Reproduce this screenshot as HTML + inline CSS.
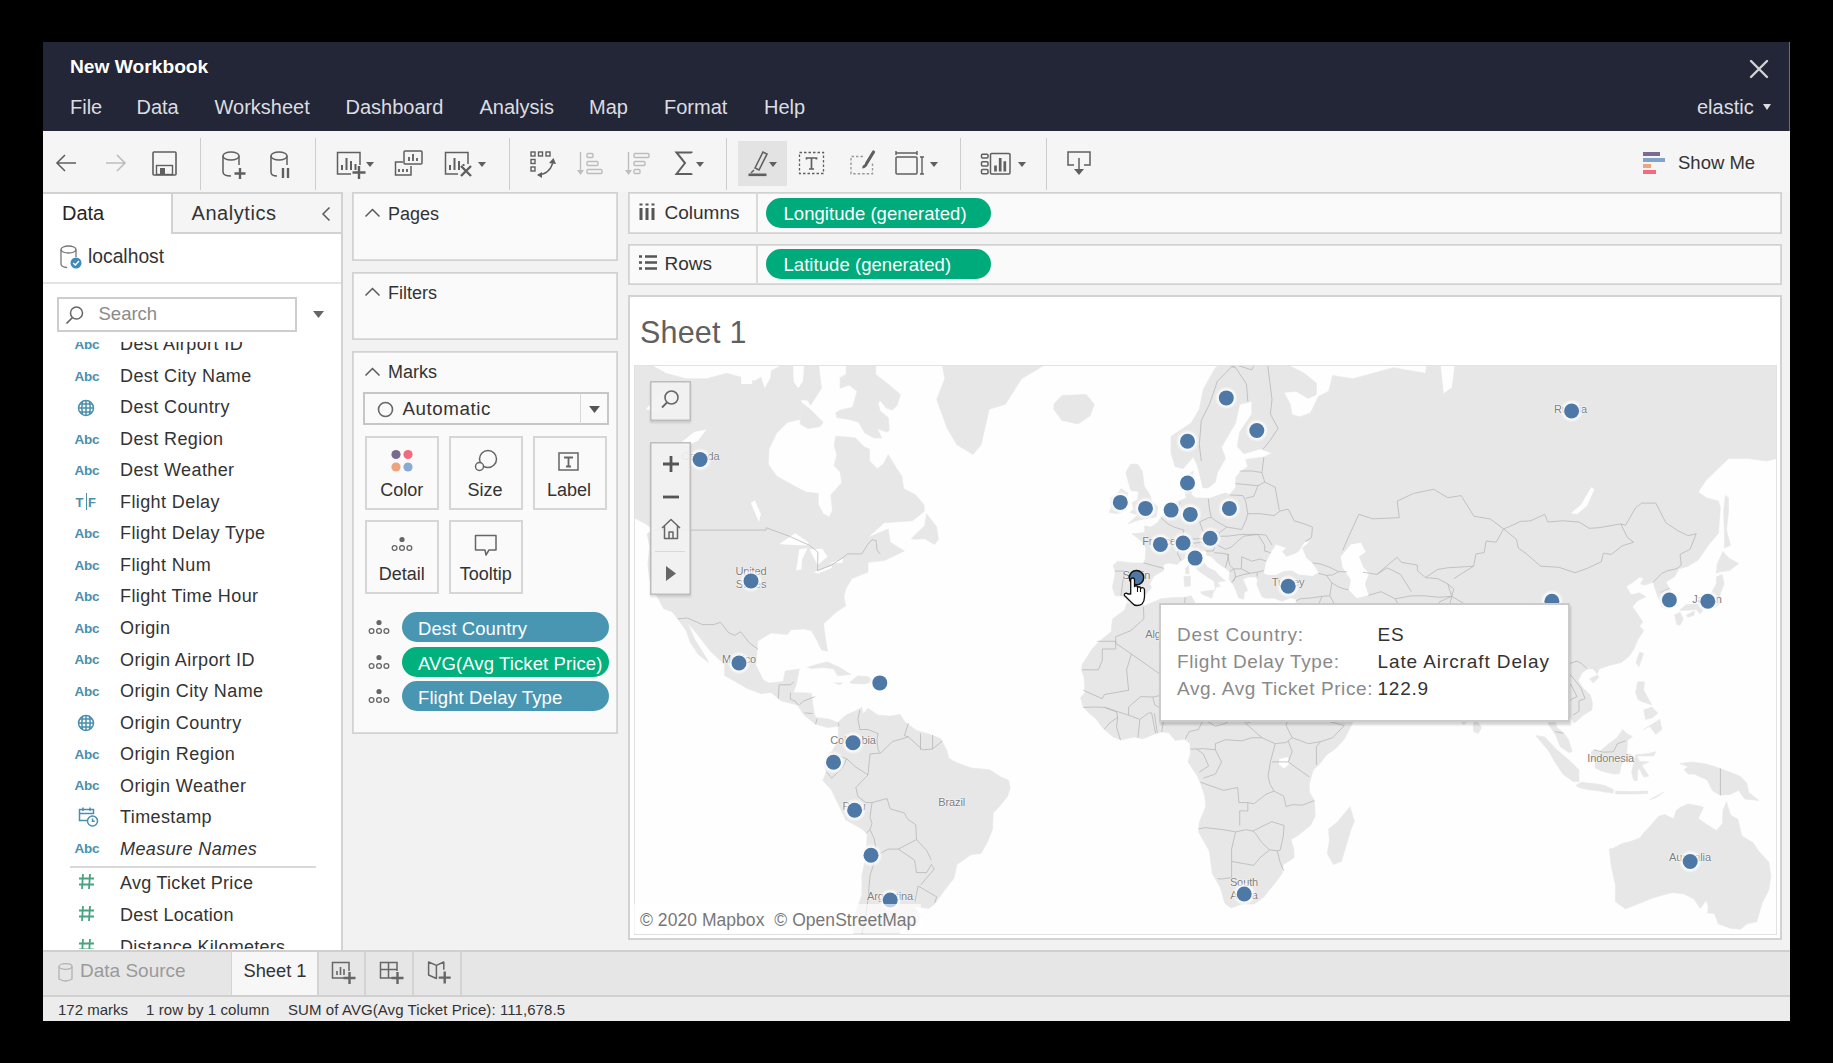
<!DOCTYPE html>
<html><head><meta charset="utf-8"><style>
*{margin:0;padding:0;box-sizing:border-box}
html,body{width:1833px;height:1063px;overflow:hidden;background:#000;font-family:"Liberation Sans",sans-serif}
.t{position:absolute;white-space:nowrap;line-height:1}
.r{position:absolute}
.s{position:absolute;overflow:visible}
</style></head><body>
<div class="r" style="left:43px;top:42px;width:1747px;height:979px;background:#f0f0f0;"></div>
<div class="r" style="left:43px;top:42px;width:1747px;height:89px;background:#222636;"></div>
<div class="r" style="left:1789px;top:42px;width:1px;height:89px;background:#6a6d78;"></div>
<div class="t" style="left:70.0px;top:56.5px;font-size:19.2px;color:#ffffff;font-weight:700;font-style:normal;letter-spacing:0px;">New Workbook</div>
<div class="t" style="left:70.0px;top:96.8px;font-size:20px;color:#dcdde0;font-weight:400;font-style:normal;letter-spacing:0px;">File</div>
<div class="t" style="left:136.5px;top:96.8px;font-size:20px;color:#dcdde0;font-weight:400;font-style:normal;letter-spacing:0px;">Data</div>
<div class="t" style="left:214.5px;top:96.8px;font-size:20px;color:#dcdde0;font-weight:400;font-style:normal;letter-spacing:0px;">Worksheet</div>
<div class="t" style="left:345.5px;top:96.8px;font-size:20px;color:#dcdde0;font-weight:400;font-style:normal;letter-spacing:0px;">Dashboard</div>
<div class="t" style="left:479.5px;top:96.8px;font-size:20px;color:#dcdde0;font-weight:400;font-style:normal;letter-spacing:0px;">Analysis</div>
<div class="t" style="left:589.0px;top:96.8px;font-size:20px;color:#dcdde0;font-weight:400;font-style:normal;letter-spacing:0px;">Map</div>
<div class="t" style="left:664.0px;top:96.8px;font-size:20px;color:#dcdde0;font-weight:400;font-style:normal;letter-spacing:0px;">Format</div>
<div class="t" style="left:764.0px;top:96.8px;font-size:20px;color:#dcdde0;font-weight:400;font-style:normal;letter-spacing:0px;">Help</div>
<div class="t" style="left:1697.0px;top:96.8px;font-size:20px;color:#dcdde0;font-weight:400;font-style:normal;letter-spacing:0px;">elastic</div>
<svg class="s" style="left:1763px;top:104px;" width="8" height="6" viewBox="0 0 8 6"><path d="M0,0 L8,0 L4,6Z" fill="#dcdde0"/></svg>
<svg class="s" style="left:1749px;top:59px;" width="20" height="20" viewBox="0 0 20 20"><path d="M2,2 L18,18 M18,2 L2,18" stroke="#d2d3d6" stroke-width="2.4" stroke-linecap="round"/></svg>
<div class="r" style="left:43px;top:131px;width:1747px;height:61px;background:#f5f5f5;"></div>
<div class="r" style="left:43px;top:192px;width:1747px;height:758px;background:#f2f2f2;"></div>
<div class="r" style="left:199.6px;top:138px;width:1.3000000000000114px;height:52px;background:#cdcdcd;"></div>
<div class="r" style="left:315.1px;top:138px;width:1.2999999999999545px;height:52px;background:#cdcdcd;"></div>
<div class="r" style="left:508.6px;top:138px;width:1.2999999999999545px;height:52px;background:#cdcdcd;"></div>
<div class="r" style="left:726.0px;top:138px;width:1.2999999999999545px;height:52px;background:#cdcdcd;"></div>
<div class="r" style="left:960.1px;top:138px;width:1.2999999999999545px;height:52px;background:#cdcdcd;"></div>
<div class="r" style="left:1045.6px;top:138px;width:1.300000000000182px;height:52px;background:#cdcdcd;"></div>
<div class="r" style="left:738px;top:141px;width:49px;height:45px;background:#e3e3e3;"></div>
<svg class="s" style="left:55px;top:153px;" width="22" height="20" viewBox="0 0 22 20"><path d="M21,10 H2 M10,2 L2,10 L10,18" fill="none" stroke="#5f5f5f" stroke-width="1.6"/></svg>
<svg class="s" style="left:105px;top:153px;" width="22" height="20" viewBox="0 0 22 20"><path d="M1,10 H20 M12,2 L20,10 L12,18" fill="none" stroke="#bdbdbd" stroke-width="1.6"/></svg>
<svg class="s" style="left:152px;top:151px;" width="26" height="26" viewBox="0 0 26 26"><rect x="1" y="1" width="23" height="23" rx="1" fill="none" stroke="#5f5f5f" stroke-width="1.6"/><rect x="4.5" y="14.5" width="16" height="9" fill="none" stroke="#5f5f5f" stroke-width="1.4"/><rect x="8" y="17" width="5" height="7" fill="#5f5f5f"/></svg>
<svg class="s" style="left:222px;top:151px;" width="26" height="30" viewBox="0 0 26 30"><ellipse cx="9" cy="5" rx="8" ry="4" fill="none" stroke="#5f5f5f" stroke-width="1.5"/><path d="M1,5 V21 Q1,25 9,25" fill="none" stroke="#5f5f5f" stroke-width="1.5"/><path d="M17,5 V14" stroke="#5f5f5f" stroke-width="1.5"/><path d="M18,17 V28 M12.5,22.5 H23.5" stroke="#5f5f5f" stroke-width="2.4"/></svg>
<svg class="s" style="left:270px;top:151px;" width="22" height="30" viewBox="0 0 22 30"><ellipse cx="9" cy="5" rx="8" ry="4" fill="none" stroke="#5f5f5f" stroke-width="1.5"/><path d="M1,5 V21 Q1,25 7,25" fill="none" stroke="#5f5f5f" stroke-width="1.5"/><path d="M17,5 V14" stroke="#5f5f5f" stroke-width="1.5"/><path d="M13,17 V27 M18,17 V27" stroke="#5f5f5f" stroke-width="2.4"/></svg>
<svg class="s" style="left:336px;top:151px;" width="28" height="30" viewBox="0 0 28 30"><path d="M15,23 H1.5 V1.5 H24 V14" fill="none" stroke="#5f5f5f" stroke-width="1.5"/><path d="M6,19 V14 M10.5,19 V7 M15,19 V10 M19.5,19 V13" stroke="#5f5f5f" stroke-width="2"/><path d="M23,15 V28 M16.5,21.5 H29.5" stroke="#5f5f5f" stroke-width="2.4"/></svg>
<svg class="s" style="left:365.5px;top:161.5px;" width="8" height="5" viewBox="0 0 8 5"><path d="M0,0 L8,0 L4,5Z" fill="#5f5f5f"/></svg>
<svg class="s" style="left:394px;top:150px;" width="30" height="27" viewBox="0 0 30 27"><rect x="10" y="1" width="18" height="13" rx="1" fill="none" stroke="#5f5f5f" stroke-width="1.5"/><path d="M15,11 V7 M19,11 V4 M23,11 V8" stroke="#5f5f5f" stroke-width="1.8"/><path d="M9,12 H1.5 V25 H17 V16" fill="none" stroke="#5f5f5f" stroke-width="1.5"/><path d="M5,22 V19 M9,22 V19 M13,22 V19" stroke="#5f5f5f" stroke-width="1.8"/></svg>
<svg class="s" style="left:444px;top:151px;" width="32" height="30" viewBox="0 0 32 30"><path d="M14,23 H1.5 V1.5 H24 V13" fill="none" stroke="#5f5f5f" stroke-width="1.5"/><path d="M6,19 V14 M10.5,19 V7 M15,19 V10 M19.5,15 V13" stroke="#5f5f5f" stroke-width="2"/><path d="M17,15 L27,25 M27,15 L17,25" stroke="#5f5f5f" stroke-width="2.4"/></svg>
<svg class="s" style="left:478px;top:161.5px;" width="8" height="5" viewBox="0 0 8 5"><path d="M0,0 L8,0 L4,5Z" fill="#5f5f5f"/></svg>
<svg class="s" style="left:530px;top:151px;" width="28" height="28" viewBox="0 0 28 28"><g fill="none" stroke="#5f5f5f" stroke-width="1.4"><rect x="1" y="1" width="4" height="4"/><rect x="8.5" y="1" width="4" height="4"/><rect x="16" y="1" width="4" height="4"/><rect x="1" y="8.5" width="4" height="4"/><rect x="1" y="16" width="4" height="4"/><path d="M8,24 Q20,23 23,11"/></g><path d="M19,12 L23.5,7 L26,13Z M12,21 L7,24 L12,27Z" fill="#5f5f5f"/></svg>
<svg class="s" style="left:576px;top:151px;" width="28" height="27" viewBox="0 0 28 27"><g fill="none" stroke="#bdbdbd" stroke-width="1.4"><path d="M4.5,1 V20"/><rect x="11" y="2.5" width="6" height="4" rx="1"/><rect x="11" y="10.5" width="11" height="4" rx="1"/><rect x="11" y="18.5" width="15" height="4" rx="1"/></g><path d="M1,19 L8,19 L4.5,24Z" fill="#bdbdbd"/></svg>
<svg class="s" style="left:624px;top:151px;" width="28" height="27" viewBox="0 0 28 27"><g fill="none" stroke="#bdbdbd" stroke-width="1.4"><path d="M4.5,1 V20"/><rect x="10" y="2.5" width="15" height="4" rx="1"/><rect x="10" y="10.5" width="11" height="4" rx="1"/><rect x="10" y="18.5" width="6" height="4" rx="1"/></g><path d="M1,19 L8,19 L4.5,24Z" fill="#bdbdbd"/></svg>
<svg class="s" style="left:674px;top:150px;" width="20" height="27" viewBox="0 0 20 27"><path d="M17.5,3 V2.5 H2.5 L11,13 L2.5,24 H17.5 V23.5" fill="none" stroke="#5f5f5f" stroke-width="2"/></svg>
<svg class="s" style="left:695.8px;top:161.5px;" width="8" height="5" viewBox="0 0 8 5"><path d="M0,0 L8,0 L4,5Z" fill="#5f5f5f"/></svg>
<svg class="s" style="left:746px;top:148px;" width="24" height="30" viewBox="0 0 24 30"><path d="M9,20 L17,4 L21,6 L13,22 Z" fill="none" stroke="#5f5f5f" stroke-width="1.6"/><path d="M8,22 L5,25" stroke="#5f5f5f" stroke-width="1.4"/><rect x="2.5" y="25.5" width="18" height="2.6" fill="#5f5f5f"/></svg>
<svg class="s" style="left:768.5px;top:161.5px;" width="8" height="5" viewBox="0 0 8 5"><path d="M0,0 L8,0 L4,5Z" fill="#5f5f5f"/></svg>
<svg class="s" style="left:798px;top:151px;" width="28" height="25" viewBox="0 0 28 25"><rect x="1.5" y="1.5" width="24" height="21" fill="none" stroke="#5f5f5f" stroke-width="1.3" stroke-dasharray="2.5,2"/><path d="M8.5,8.5 V7 H18.5 V8.5 M13.5,7 V18 M11,18 H16" fill="none" stroke="#5f5f5f" stroke-width="1.7"/></svg>
<svg class="s" style="left:849px;top:149px;" width="26" height="28" viewBox="0 0 26 28"><path d="M14,7.5 H2 V24.8 H23.5 V14" fill="none" stroke="#9a9a9a" stroke-width="1.4" stroke-dasharray="2.5,2"/><path d="M24.5,3 L17.5,14.5" stroke="#5f5f5f" stroke-width="3.2" stroke-linecap="round"/><path d="M16.5,14.5 Q13.5,16 13.2,19.5 Q16.5,19 18.5,16.5Z" fill="#5f5f5f"/></svg>
<svg class="s" style="left:894px;top:149px;" width="32" height="27" viewBox="0 0 32 27"><path d="M2,2 V6 M2,4 H23 M23,2 V6" fill="none" stroke="#5f5f5f" stroke-width="1.4"/><rect x="2" y="8" width="21" height="17" rx="1" fill="none" stroke="#5f5f5f" stroke-width="1.5"/><path d="M26,8 H30 M28,8 V25 M26,25 H30" fill="none" stroke="#5f5f5f" stroke-width="1.4"/></svg>
<svg class="s" style="left:930px;top:161.5px;" width="8" height="5" viewBox="0 0 8 5"><path d="M0,0 L8,0 L4,5Z" fill="#5f5f5f"/></svg>
<svg class="s" style="left:979px;top:152px;" width="33" height="24" viewBox="0 0 33 24"><g fill="none" stroke="#5f5f5f" stroke-width="1.5"><rect x="2.5" y="2.2" width="6.5" height="3.8" rx="1"/><rect x="2.5" y="9.8" width="6.5" height="4.2" rx="1"/><rect x="2.5" y="17.5" width="6.5" height="4.2" rx="1"/><rect x="11.5" y="1.5" width="19.5" height="20.5" rx="1.2"/></g><path d="M16.5,19.5 V13.6 M21.2,19.5 V6 M25.8,19.5 V9.3" stroke="#5f5f5f" stroke-width="2.7"/></svg>
<svg class="s" style="left:1018px;top:161.5px;" width="8" height="5" viewBox="0 0 8 5"><path d="M0,0 L8,0 L4,5Z" fill="#5f5f5f"/></svg>
<svg class="s" style="left:1066px;top:150px;" width="26" height="27" viewBox="0 0 26 27"><path d="M8,15 H2 V2 H24 V15 H18" fill="none" stroke="#5f5f5f" stroke-width="1.5"/><path d="M13,8 V20" stroke="#5f5f5f" stroke-width="1.5"/><path d="M8,19 L13,25 L18,19Z" fill="#5f5f5f"/></svg>
<div class="r" style="left:1643px;top:152px;width:17px;height:4px;background:#7c6a93;"></div>
<div class="r" style="left:1643px;top:158px;width:22px;height:4px;background:#7ea4cb;"></div>
<div class="r" style="left:1643px;top:164px;width:8px;height:4px;background:#f0a57c;"></div>
<div class="r" style="left:1643px;top:170px;width:13px;height:4px;background:#f46b7d;"></div>
<div class="t" style="left:1678.0px;top:154.3px;font-size:18.5px;color:#333333;font-weight:400;font-style:normal;letter-spacing:0px;">Show Me</div>
<div class="r" style="left:43px;top:192px;width:298px;height:757.5px;background:#ffffff;"></div>
<div class="r" style="left:341.2px;top:192px;width:1.8000000000000114px;height:757.5px;background:#d2d2d2;"></div>
<div class="r" style="left:43px;top:192px;width:300px;height:1.8000000000000114px;background:#d2d2d2;"></div>
<div class="r" style="left:171px;top:193.8px;width:170.2px;height:39.19999999999999px;background:#f5f5f5;"></div>
<div class="r" style="left:171px;top:193.8px;width:1.6999999999999886px;height:39.19999999999999px;background:#d2d2d2;"></div>
<div class="r" style="left:171px;top:232px;width:170.2px;height:1.8000000000000114px;background:#d2d2d2;"></div>
<div class="t" style="left:62.0px;top:203.2px;font-size:20px;color:#262626;font-weight:400;font-style:normal;letter-spacing:0px;">Data</div>
<div class="t" style="left:191.5px;top:203.2px;font-size:20px;color:#333333;font-weight:400;font-style:normal;letter-spacing:0.55px;">Analytics</div>
<svg class="s" style="left:321px;top:206px;" width="10" height="16" viewBox="0 0 10 16"><path d="M8.5,1.5 L2,8 L8.5,14.5" fill="none" stroke="#5a5a5a" stroke-width="1.5"/></svg>
<svg class="s" style="left:60px;top:245px;" width="24" height="26" viewBox="0 0 24 26"><ellipse cx="8.5" cy="4.5" rx="7.5" ry="3.5" fill="none" stroke="#777" stroke-width="1.3"/><path d="M1,4.5 V19 Q1,22 7,22.5" fill="none" stroke="#777" stroke-width="1.3"/><path d="M16,4.5 V12" stroke="#777" stroke-width="1.3"/><circle cx="16" cy="18" r="5.5" fill="#3d8bbd"/><path d="M13.2,18 L15.3,20 L19,16" fill="none" stroke="#fff" stroke-width="1.4"/></svg>
<div class="t" style="left:88.0px;top:246.7px;font-size:19.3px;color:#333333;font-weight:400;font-style:normal;letter-spacing:0px;">localhost</div>
<div class="r" style="left:43px;top:282px;width:298px;height:2px;background:#e3e3e3;"></div>
<div class="r" style="left:57px;top:297px;width:240px;height:35px;background:#ffffff;box-shadow:inset 0 0 0 2px #cdcdcd;"></div>
<svg class="s" style="left:65px;top:305px;" width="20" height="20" viewBox="0 0 20 20"><circle cx="11.5" cy="8" r="6" fill="none" stroke="#666" stroke-width="1.5"/><path d="M7.5,12.5 L1.5,18.5" stroke="#666" stroke-width="1.7"/></svg>
<div class="t" style="left:98.5px;top:304.9px;font-size:18.5px;color:#8a8a8a;font-weight:400;font-style:normal;letter-spacing:0px;">Search</div>
<svg class="s" style="left:313px;top:311px;" width="11" height="7" viewBox="0 0 11 7"><path d="M0,0 L11,0 L5.5,7Z" fill="#666"/></svg>
<div class="r" style="left:43px;top:341.5px;width:298px;height:607.5px;overflow:hidden"><div class="r" style="left:-43px;top:-341.5px;width:400px;height:1000px"><div class="t" style="left:120.0px;top:335.4px;font-size:18px;color:#333333;font-weight:400;font-style:normal;letter-spacing:0.4px;">Dest Airport ID</div>
<div class="t" style="left:74.5px;top:338.2px;font-size:13.5px;color:#4b8fad;font-weight:700;font-style:normal;letter-spacing:-0.2px;">Abc</div>
<div class="t" style="left:120.0px;top:366.9px;font-size:18px;color:#333333;font-weight:400;font-style:normal;letter-spacing:0.4px;">Dest City Name</div>
<div class="t" style="left:74.5px;top:369.7px;font-size:13.5px;color:#4b8fad;font-weight:700;font-style:normal;letter-spacing:-0.2px;">Abc</div>
<div class="t" style="left:120.0px;top:398.4px;font-size:18px;color:#333333;font-weight:400;font-style:normal;letter-spacing:0.4px;">Dest Country</div>
<svg class="s" style="left:77px;top:398.62px;" width="18" height="18" viewBox="0 0 18 18"><g fill="none" stroke="#4b8fad" stroke-width="1.5"><circle cx="9" cy="9" r="7.5"/><path d="M1.5,9 H16.5 M9,1.5 V16.5 M3,5 H15 M3,13 H15 M5.5,2.8 Q4,9 5.5,15.2 M12.5,2.8 Q14,9 12.5,15.2"/></g></svg>
<div class="t" style="left:120.0px;top:429.9px;font-size:18px;color:#333333;font-weight:400;font-style:normal;letter-spacing:0.4px;">Dest Region</div>
<div class="t" style="left:74.5px;top:432.7px;font-size:13.5px;color:#4b8fad;font-weight:700;font-style:normal;letter-spacing:-0.2px;">Abc</div>
<div class="t" style="left:120.0px;top:461.4px;font-size:18px;color:#333333;font-weight:400;font-style:normal;letter-spacing:0.4px;">Dest Weather</div>
<div class="t" style="left:74.5px;top:464.2px;font-size:13.5px;color:#4b8fad;font-weight:700;font-style:normal;letter-spacing:-0.2px;">Abc</div>
<div class="t" style="left:120.0px;top:492.9px;font-size:18px;color:#333333;font-weight:400;font-style:normal;letter-spacing:0.4px;">Flight Delay</div>
<div class="t" style="left:75.5px;top:496.1px;font-size:13px;color:#4b8fad;font-weight:700;font-style:normal;letter-spacing:0px;">T</div>
<div class="t" style="left:88.0px;top:496.1px;font-size:13px;color:#4b8fad;font-weight:700;font-style:normal;letter-spacing:0px;">F</div>
<div class="r" style="left:85.6px;top:492.65000000000003px;width:1.5px;height:17.0px;background:#4b8fad;"></div>
<div class="t" style="left:120.0px;top:524.4px;font-size:18px;color:#333333;font-weight:400;font-style:normal;letter-spacing:0.4px;">Flight Delay Type</div>
<div class="t" style="left:74.5px;top:527.2px;font-size:13.5px;color:#4b8fad;font-weight:700;font-style:normal;letter-spacing:-0.2px;">Abc</div>
<div class="t" style="left:120.0px;top:555.9px;font-size:18px;color:#333333;font-weight:400;font-style:normal;letter-spacing:0.4px;">Flight Num</div>
<div class="t" style="left:74.5px;top:558.7px;font-size:13.5px;color:#4b8fad;font-weight:700;font-style:normal;letter-spacing:-0.2px;">Abc</div>
<div class="t" style="left:120.0px;top:587.4px;font-size:18px;color:#333333;font-weight:400;font-style:normal;letter-spacing:0.4px;">Flight Time Hour</div>
<div class="t" style="left:74.5px;top:590.3px;font-size:13.5px;color:#4b8fad;font-weight:700;font-style:normal;letter-spacing:-0.2px;">Abc</div>
<div class="t" style="left:120.0px;top:619.0px;font-size:18px;color:#333333;font-weight:400;font-style:normal;letter-spacing:0.4px;">Origin</div>
<div class="t" style="left:74.5px;top:621.8px;font-size:13.5px;color:#4b8fad;font-weight:700;font-style:normal;letter-spacing:-0.2px;">Abc</div>
<div class="t" style="left:120.0px;top:650.5px;font-size:18px;color:#333333;font-weight:400;font-style:normal;letter-spacing:0.4px;">Origin Airport ID</div>
<div class="t" style="left:74.5px;top:653.3px;font-size:13.5px;color:#4b8fad;font-weight:700;font-style:normal;letter-spacing:-0.2px;">Abc</div>
<div class="t" style="left:120.0px;top:682.0px;font-size:18px;color:#333333;font-weight:400;font-style:normal;letter-spacing:0.4px;">Origin City Name</div>
<div class="t" style="left:74.5px;top:684.8px;font-size:13.5px;color:#4b8fad;font-weight:700;font-style:normal;letter-spacing:-0.2px;">Abc</div>
<div class="t" style="left:120.0px;top:713.5px;font-size:18px;color:#333333;font-weight:400;font-style:normal;letter-spacing:0.4px;">Origin Country</div>
<svg class="s" style="left:77px;top:713.72px;" width="18" height="18" viewBox="0 0 18 18"><g fill="none" stroke="#4b8fad" stroke-width="1.5"><circle cx="9" cy="9" r="7.5"/><path d="M1.5,9 H16.5 M9,1.5 V16.5 M3,5 H15 M3,13 H15 M5.5,2.8 Q4,9 5.5,15.2 M12.5,2.8 Q14,9 12.5,15.2"/></g></svg>
<div class="t" style="left:120.0px;top:745.0px;font-size:18px;color:#333333;font-weight:400;font-style:normal;letter-spacing:0.4px;">Origin Region</div>
<div class="t" style="left:74.5px;top:747.8px;font-size:13.5px;color:#4b8fad;font-weight:700;font-style:normal;letter-spacing:-0.2px;">Abc</div>
<div class="t" style="left:120.0px;top:776.5px;font-size:18px;color:#333333;font-weight:400;font-style:normal;letter-spacing:0.4px;">Origin Weather</div>
<div class="t" style="left:74.5px;top:779.3px;font-size:13.5px;color:#4b8fad;font-weight:700;font-style:normal;letter-spacing:-0.2px;">Abc</div>
<div class="t" style="left:120.0px;top:808.0px;font-size:18px;color:#333333;font-weight:400;font-style:normal;letter-spacing:0.4px;">Timestamp</div>
<svg class="s" style="left:78px;top:806.25px;" width="22" height="22" viewBox="0 0 22 22"><g fill="none" stroke="#4b8fad" stroke-width="1.5"><path d="M9,14.5 H1.5 V3.5 H15.5 V8"/><path d="M1.5,7.5 H15.5 M5,1.5 V5 M12,1.5 V5"/><circle cx="14.5" cy="15" r="5"/><path d="M14.5,12.5 V15.3 H16.8"/></g></svg>
<div class="t" style="left:120.0px;top:839.5px;font-size:18px;color:#333333;font-weight:400;font-style:italic;letter-spacing:0.4px;">Measure Names</div>
<div class="t" style="left:74.5px;top:842.3px;font-size:13.5px;color:#4b8fad;font-weight:700;font-style:normal;letter-spacing:-0.2px;">Abc</div>
<div class="r" style="left:70px;top:866px;width:246px;height:2px;background:#d9d9d9;"></div>
<div class="t" style="left:120.0px;top:873.9px;font-size:18px;color:#333333;font-weight:400;font-style:normal;letter-spacing:0.28px;">Avg Ticket Price</div>
<svg class="s" style="left:78px;top:873.1px;" width="17" height="17" viewBox="0 0 17 17"><path d="M5,1 L4,16 M12,1 L11,16 M1,5.5 H16 M1,11.5 H16" stroke="#49a37f" stroke-width="1.8"/></svg>
<div class="t" style="left:120.0px;top:906.1px;font-size:18px;color:#333333;font-weight:400;font-style:normal;letter-spacing:0.28px;">Dest Location</div>
<svg class="s" style="left:78px;top:905.3000000000001px;" width="17" height="17" viewBox="0 0 17 17"><path d="M5,1 L4,16 M12,1 L11,16 M1,5.5 H16 M1,11.5 H16" stroke="#49a37f" stroke-width="1.8"/></svg>
<div class="t" style="left:120.0px;top:938.3px;font-size:18px;color:#333333;font-weight:400;font-style:normal;letter-spacing:0.28px;">Distance Kilometers</div>
<svg class="s" style="left:78px;top:937.5px;" width="17" height="17" viewBox="0 0 17 17"><path d="M5,1 L4,16 M12,1 L11,16 M1,5.5 H16 M1,11.5 H16" stroke="#49a37f" stroke-width="1.8"/></svg>
</div></div>
<div class="r" style="left:352.2px;top:192px;width:266.3px;height:69px;background:#fafafa;box-shadow:inset 0 0 0 1.8px #d2d2d2;"></div>
<svg class="s" style="left:364px;top:208px;" width="17" height="10" viewBox="0 0 17 10"><path d="M1.5,8.5 L8.5,1.5 L15.5,8.5" fill="none" stroke="#5a5a5a" stroke-width="1.5"/></svg>
<div class="t" style="left:388.0px;top:204.8px;font-size:18px;color:#333333;font-weight:400;font-style:normal;letter-spacing:0px;">Pages</div>
<div class="r" style="left:352.2px;top:272px;width:266.3px;height:68px;background:#fafafa;box-shadow:inset 0 0 0 1.8px #d2d2d2;"></div>
<svg class="s" style="left:364px;top:287px;" width="17" height="10" viewBox="0 0 17 10"><path d="M1.5,8.5 L8.5,1.5 L15.5,8.5" fill="none" stroke="#5a5a5a" stroke-width="1.5"/></svg>
<div class="t" style="left:388.0px;top:283.8px;font-size:18px;color:#333333;font-weight:400;font-style:normal;letter-spacing:0px;">Filters</div>
<div class="r" style="left:352.2px;top:351px;width:266.3px;height:383px;background:#fafafa;box-shadow:inset 0 0 0 1.8px #d2d2d2;"></div>
<svg class="s" style="left:364px;top:366.5px;" width="17" height="10" viewBox="0 0 17 10"><path d="M1.5,8.5 L8.5,1.5 L15.5,8.5" fill="none" stroke="#5a5a5a" stroke-width="1.5"/></svg>
<div class="t" style="left:388.0px;top:363.3px;font-size:18px;color:#333333;font-weight:400;font-style:normal;letter-spacing:0px;">Marks</div>
<div class="r" style="left:363px;top:392px;width:246px;height:33px;background:#fafafa;box-shadow:inset 0 0 0 2px #c6c6c6;"></div>
<div class="r" style="left:579.5px;top:393px;width:1.5px;height:31px;background:#d8d8d8;"></div>
<svg class="s" style="left:377px;top:401px;" width="17" height="17" viewBox="0 0 17 17"><circle cx="8.5" cy="8.5" r="7" fill="none" stroke="#666" stroke-width="1.6"/></svg>
<div class="t" style="left:402.5px;top:400.3px;font-size:18.8px;color:#333333;font-weight:400;font-style:normal;letter-spacing:0.55px;">Automatic</div>
<svg class="s" style="left:589px;top:406px;" width="11" height="7" viewBox="0 0 11 7"><path d="M0,0 L11,0 L5.5,7Z" fill="#555"/></svg>
<div class="r" style="left:364.5px;top:435.5px;width:74.0px;height:74.0px;background:#fafafa;box-shadow:inset 0 0 0 2px #d6d6d6;"></div>
<div class="r" style="left:448.5px;top:435.5px;width:74.0px;height:74.0px;background:#fafafa;box-shadow:inset 0 0 0 2px #d6d6d6;"></div>
<div class="r" style="left:532.5px;top:435.5px;width:74.0px;height:74.0px;background:#fafafa;box-shadow:inset 0 0 0 2px #d6d6d6;"></div>
<div class="r" style="left:364.5px;top:519.5px;width:74.0px;height:74.0px;background:#fafafa;box-shadow:inset 0 0 0 2px #d6d6d6;"></div>
<div class="r" style="left:448.5px;top:519.5px;width:74.0px;height:74.0px;background:#fafafa;box-shadow:inset 0 0 0 2px #d6d6d6;"></div>
<div class="t" style="left:380.2px;top:480.7px;font-size:18px;color:#333;font-weight:400;font-style:normal;letter-spacing:0px;">Color</div>
<div class="t" style="left:467.5px;top:480.7px;font-size:18px;color:#333;font-weight:400;font-style:normal;letter-spacing:0px;">Size</div>
<div class="t" style="left:547.0px;top:480.7px;font-size:18px;color:#333;font-weight:400;font-style:normal;letter-spacing:0px;">Label</div>
<div class="t" style="left:378.8px;top:564.8px;font-size:18px;color:#333;font-weight:400;font-style:normal;letter-spacing:0px;">Detail</div>
<div class="t" style="left:459.8px;top:564.8px;font-size:18px;color:#333;font-weight:400;font-style:normal;letter-spacing:0px;">Tooltip</div>
<svg class="s" style="left:388px;top:447px;" width="26" height="26" viewBox="0 0 26 26"><circle cx="8" cy="7.5" r="4.6" fill="#7b6a90"/><circle cx="20" cy="7.5" r="4.6" fill="#ef6b7d"/><circle cx="8" cy="20" r="4.6" fill="#eea37c"/><circle cx="20" cy="20" r="4.6" fill="#87abd2"/></svg>
<svg class="s" style="left:474px;top:449px;" width="24" height="24" viewBox="0 0 24 24"><circle cx="14" cy="10" r="8.5" fill="none" stroke="#666" stroke-width="1.5"/><circle cx="5.5" cy="17.5" r="4" fill="#fafafa" stroke="#666" stroke-width="1.5"/></svg>
<svg class="s" style="left:558px;top:452px;" width="23" height="20" viewBox="0 0 23 20"><rect x="1" y="1" width="19" height="17" fill="none" stroke="#666" stroke-width="1.5"/><path d="M6,5.5 H15 M10.5,5.5 V14.5 M8,14.5 H13" stroke="#666" stroke-width="1.8"/></svg>
<svg class="s" style="left:390.5px;top:536px;" width="22" height="16" viewBox="0 0 22 16"><circle cx="11" cy="3.5" r="2.6" fill="#666"/><g fill="none" stroke="#666" stroke-width="1.3"><circle cx="3.6" cy="12" r="2.4"/><circle cx="11" cy="12" r="2.4"/><circle cx="18.4" cy="12" r="2.4"/></g></svg>
<svg class="s" style="left:474px;top:534px;" width="24" height="24" viewBox="0 0 24 24"><path d="M1.5,1.5 H22 V16 H15 L12,21 L11,16 H1.5Z" fill="none" stroke="#666" stroke-width="1.5" stroke-linejoin="round"/></svg>
<div class="r" style="left:401.5px;top:612px;width:207.5px;height:30px;background:#4996b2;border-radius:15px;"></div>
<div class="t" style="left:418.0px;top:619.8px;font-size:18.5px;color:#ffffff;font-weight:400;font-style:normal;letter-spacing:0.1px;">Dest Country</div>
<svg class="s" style="left:368px;top:619px;" width="22" height="16" viewBox="0 0 22 16"><circle cx="11" cy="3.5" r="2.6" fill="#666"/><g fill="none" stroke="#666" stroke-width="1.3"><circle cx="3.6" cy="12" r="2.4"/><circle cx="11" cy="12" r="2.4"/><circle cx="18.4" cy="12" r="2.4"/></g></svg>
<div class="r" style="left:401.5px;top:647px;width:207.5px;height:30px;background:#00b07d;border-radius:15px;"></div>
<div class="t" style="left:418.0px;top:654.8px;font-size:18.5px;color:#ffffff;font-weight:400;font-style:normal;letter-spacing:0.1px;">AVG(Avg Ticket Price)</div>
<svg class="s" style="left:368px;top:654px;" width="22" height="16" viewBox="0 0 22 16"><circle cx="11" cy="3.5" r="2.6" fill="#666"/><g fill="none" stroke="#666" stroke-width="1.3"><circle cx="3.6" cy="12" r="2.4"/><circle cx="11" cy="12" r="2.4"/><circle cx="18.4" cy="12" r="2.4"/></g></svg>
<div class="r" style="left:401.5px;top:681px;width:207.5px;height:30px;background:#4996b2;border-radius:15px;"></div>
<div class="t" style="left:418.0px;top:688.8px;font-size:18.5px;color:#ffffff;font-weight:400;font-style:normal;letter-spacing:0.1px;">Flight Delay Type</div>
<svg class="s" style="left:368px;top:688px;" width="22" height="16" viewBox="0 0 22 16"><circle cx="11" cy="3.5" r="2.6" fill="#666"/><g fill="none" stroke="#666" stroke-width="1.3"><circle cx="3.6" cy="12" r="2.4"/><circle cx="11" cy="12" r="2.4"/><circle cx="18.4" cy="12" r="2.4"/></g></svg>
<div class="r" style="left:628px;top:192px;width:1154px;height:41.5px;background:#fafafa;box-shadow:inset 0 0 0 1.8px #d2d2d2;"></div>
<div class="r" style="left:756px;top:194px;width:2px;height:37.5px;background:#dadada;"></div>
<div class="t" style="left:664.5px;top:202.9px;font-size:19px;color:#333333;font-weight:400;font-style:normal;letter-spacing:0px;">Columns</div>
<div class="r" style="left:766px;top:198.3px;width:225px;height:29.80000000000001px;background:#00ab7b;border-radius:15px;"></div>
<div class="t" style="left:783.5px;top:204.9px;font-size:18.5px;color:#ffffff;font-weight:400;font-style:normal;letter-spacing:0.05px;">Longitude (generated)</div>
<div class="r" style="left:628px;top:243.5px;width:1154px;height:41.0px;background:#fafafa;box-shadow:inset 0 0 0 1.8px #d2d2d2;"></div>
<div class="r" style="left:756px;top:245.5px;width:2px;height:37.0px;background:#dadada;"></div>
<div class="t" style="left:664.5px;top:253.9px;font-size:19px;color:#333333;font-weight:400;font-style:normal;letter-spacing:0px;">Rows</div>
<div class="r" style="left:766px;top:249px;width:225px;height:29.80000000000001px;background:#00ab7b;border-radius:15px;"></div>
<div class="t" style="left:783.5px;top:255.6px;font-size:18.5px;color:#ffffff;font-weight:400;font-style:normal;letter-spacing:0.05px;">Latitude (generated)</div>
<svg class="s" style="left:639px;top:203px;" width="17" height="18" viewBox="0 0 17 18"><path d="M2,5 V17 M8,5 V17 M14,5 V17" stroke="#555" stroke-width="3"/><path d="M2,0.5 V2.5 M8,0.5 V2.5 M14,0.5 V2.5" stroke="#555" stroke-width="3"/></svg>
<svg class="s" style="left:638px;top:255px;" width="20" height="16" viewBox="0 0 20 16"><path d="M1,1.5 H4 M7,1.5 H19 M1,7.5 H4 M7,7.5 H19 M1,13.5 H4 M7,13.5 H19" stroke="#555" stroke-width="2.6"/></svg>
<div class="r" style="left:628px;top:295px;width:1154px;height:645px;background:#ffffff;box-shadow:inset 0 0 0 2px #d2d2d2;"></div>
<div class="t" style="left:640.0px;top:316.6px;font-size:30.5px;color:#606060;font-weight:400;font-style:normal;letter-spacing:0.2px;">Sheet 1</div>
<svg class="s" style="left:634px;top:365px;overflow:hidden" width="1141.5" height="569" viewBox="0 0 1141.5 569"><rect width="1141.5" height="569" fill="#fefefe"/><g fill="#e7e7e7" stroke="#e7e7e7" stroke-width="0.6" stroke-linejoin="round"><path d="M-52.8,-4.2 L-32.6,2.7 L-8.4,-8.8 L11.8,-3.0 L32.0,8.3 L52.2,13.7 L72.4,13.7 L92.6,8.3 L120.9,15.9 L133.0,8.3 L153.2,-3.0 L184.3,-3.0 L187.5,23.2 L176.6,40.3 L173.8,35.4 L167.3,34.4 L166.1,54.5 L153.6,57.2 L142.7,67.9 L135.0,84.0 L134.2,99.1 L142.7,111.2 L159.7,120.7 L172.2,127.1 L184.3,128.5 L184.3,139.4 L189.2,148.7 L195.2,151.9 L198.4,145.4 L196.8,129.9 L207.7,117.8 L206.1,106.8 L200.1,100.7 L202.9,89.6 L200.1,80.7 L201.7,71.3 L215.4,72.2 L221.5,73.1 L230.8,82.3 L235.6,84.0 L235.6,96.0 L243.3,103.7 L249.4,99.1 L254.2,89.6 L261.9,102.2 L267.9,111.2 L269.6,123.6 L281.7,129.9 L289.8,139.4 L290.6,146.1 L278.4,155.8 L250.2,157.7 L234.0,172.5 L254.2,163.9 L256.2,177.2 L270.4,186.0 L250.2,195.6 L234.0,197.3 L234.0,207.2 L217.8,213.6 L211.8,224.1 L209.8,231.8 L211.8,240.8 L201.7,247.6 L189.6,258.7 L191.6,275.0 L193.6,286.3 L187.5,284.9 L182.7,275.0 L177.4,265.7 L169.4,263.9 L157.2,264.8 L153.2,269.5 L137.0,268.1 L123.7,275.9 L122.9,288.5 L121.7,299.6 L129.0,314.7 L135.0,318.1 L149.2,316.4 L151.2,306.1 L165.3,303.9 L162.5,318.9 L159.3,327.4 L177.4,328.2 L179.5,344.1 L181.5,352.3 L195.6,354.3 L203.7,357.6 L204.5,361.3 L193.6,362.5 L181.5,359.2 L170.2,350.2 L163.3,339.9 L147.1,335.8 L137.0,327.4 L126.9,328.7 L112.8,323.2 L90.6,310.4 L90.6,299.6 L76.4,286.3 L62.3,268.1 L53.4,257.7 L61.1,275.0 L72.4,293.0 L74.4,297.4 L64.3,289.4 L56.2,277.3 L52.2,265.7 L43.7,253.9 L38.1,246.7 L29.6,243.7 L21.9,229.2 L15.8,214.7 L13.8,200.1 L15.8,181.9 L13.0,168.8 L19.9,165.1 L11.8,158.9 L-0.3,152.6 L-8.4,129.2 L-20.5,107.5 L-36.7,96.0 L-52.8,88.0 L-73.0,79.8 L-97.3,96.0 L-121.5,111.2 L-161.9,34.4 L-113.4,-24.7Z"/><path d="M212.2,-33.7 L241.7,-33.7 L241.7,9.4 L255.4,20.1 L266.3,29.4 L263.1,40.3 L258.6,45.1 L252.6,43.2 L246.1,35.4 L244.1,38.4 L246.1,46.1 L254.2,52.6 L255.4,65.3 L252.6,67.0 L243.3,63.5 L247.7,73.1 L240.1,73.1 L230.8,67.9 L224.7,57.2 L215.4,54.5 L202.9,52.6 L201.7,48.0 L206.1,45.1 L218.6,42.2 L223.1,26.3 L215.4,20.1 L206.1,23.2 L206.1,12.6 L212.2,9.4Z"/><path d="M167.3,37.4 L175.0,43.2 L189.2,57.2 L185.9,61.7 L173.8,63.5 L166.1,59.0Z"/><path d="M221.9,-128.6 L242.1,-92.6 L282.5,-84.4 L294.6,-33.7 L306.7,-8.8 L310.8,13.7 L302.7,34.4 L312.8,62.6 L322.9,79.8 L339.0,89.6 L347.1,79.8 L355.2,44.2 L371.4,39.3 L387.5,13.7 L415.8,-3.0 L427.9,-21.0 L432.0,-92.6 L444.1,-148.9 L395.6,-254.0 L274.4,-223.0Z"/><path d="M419.8,39.3 L427.9,30.4 L452.2,29.4 L460.2,39.3 L456.2,50.8 L444.1,59.0 L427.9,55.4 L419.8,44.2Z"/><path d="M277.2,173.7 L290.6,160.8 L292.6,148.7 L302.7,162.1 L304.3,174.3 L300.7,179.6 L290.6,173.7 L280.5,174.3Z"/><path d="M173.4,302.2 L185.5,298.7 L193.6,296.9 L205.7,302.6 L217.0,309.5 L203.7,310.8 L199.7,303.9 L189.6,302.6 L177.4,303.5Z"/><path d="M215.8,317.2 L223.9,310.8 L234.0,311.7 L240.5,316.4 L230.0,318.9 L217.8,318.5Z"/><path d="M200.5,317.7 L208.5,318.1 L205.7,319.8Z"/><path d="M244.9,317.2 L251.8,317.7 L250.2,319.4 L245.3,318.9Z"/><path d="M203.7,357.6 L211.8,350.2 L221.9,345.7 L227.9,342.4 L229.2,349.0 L234.0,343.2 L244.1,350.2 L256.2,351.1 L266.3,349.4 L270.4,356.4 L282.5,365.4 L294.6,369.0 L306.7,373.5 L312.8,385.6 L314.8,392.9 L320.9,396.9 L337.0,403.0 L355.2,404.6 L367.3,412.3 L374.6,415.2 L376.2,423.3 L373.4,431.5 L365.3,441.7 L359.2,448.0 L358.4,464.7 L353.2,477.6 L347.1,488.4 L337.0,489.7 L322.9,499.5 L320.1,513.1 L310.8,524.8 L300.7,539.1 L294.6,543.5 L280.5,541.6 L286.5,551.5 L283.3,560.1 L266.3,564.3 L265.1,572.2 L254.2,574.8 L256.2,583.0 L252.2,596.9 L244.1,605.6 L251.0,614.6 L238.0,633.2 L240.1,642.4 L230.0,651.8 L215.8,639.7 L211.8,614.6 L217.8,591.3 L219.9,574.8 L219.5,554.0 L227.9,529.5 L227.9,510.8 L232.0,490.6 L233.2,469.0 L227.9,463.9 L211.8,455.0 L206.5,443.8 L197.6,425.3 L188.8,415.2 L192.4,407.1 L190.0,399.0 L193.6,389.7 L198.4,385.6 L203.7,376.7 L204.5,366.6Z"/><path d="M629.9,-21.0 L597.6,-8.8 L581.4,2.7 L569.3,24.3 L565.3,44.2 L557.2,58.1 L537.0,71.3 L537.0,88.0 L541.0,101.4 L549.1,103.7 L559.2,92.0 L563.3,99.9 L567.3,116.4 L568.9,122.9 L574.2,122.9 L581.4,117.1 L583.5,107.5 L591.5,93.6 L587.5,82.3 L601.6,58.1 L605.7,39.3 L617.8,36.4 L617.8,48.9 L605.7,67.0 L603.3,81.5 L609.7,88.8 L625.9,84.0 L638.0,88.0 L629.9,92.0 L611.7,94.4 L613.8,101.4 L605.7,107.5 L601.6,112.7 L601.6,122.2 L595.6,129.9 L591.5,127.8 L575.4,133.3 L561.2,132.7 L557.2,129.2 L559.2,122.2 L559.2,106.0 L551.1,111.2 L549.5,122.2 L552.4,132.7 L545.1,136.1 L537.0,139.4 L533.0,149.3 L526.9,152.6 L523.3,157.7 L516.8,162.1 L510.7,160.8 L510.7,167.6 L497.8,168.8 L506.7,175.4 L512.0,183.1 L511.1,194.5 L509.5,197.9 L498.6,197.9 L483.7,196.2 L479.2,200.1 L481.2,208.3 L478.4,222.6 L481.2,230.8 L486.9,230.8 L491.3,232.8 L494.2,236.8 L498.6,233.3 L508.7,233.3 L514.8,225.7 L517.6,222.6 L515.6,218.9 L520.0,211.0 L529.7,205.6 L529.3,199.5 L535.0,197.9 L543.1,199.5 L547.1,195.6 L552.8,192.3 L558.4,197.3 L561.2,202.8 L567.3,207.7 L573.4,212.0 L580.2,216.3 L581.4,224.1 L580.2,226.7 L582.2,222.0 L586.3,221.5 L583.5,217.3 L591.5,215.8 L585.5,211.0 L581.4,206.1 L573.4,202.3 L566.5,193.4 L566.5,186.6 L572.1,185.4 L572.6,190.0 L577.4,191.7 L583.5,197.9 L591.5,203.4 L595.6,206.7 L595.2,214.7 L598.8,218.9 L601.6,224.6 L604.5,232.8 L609.7,234.3 L610.5,226.7 L613.8,225.7 L608.9,214.2 L613.8,212.0 L621.8,212.0 L623.9,215.8 L622.6,218.9 L625.9,226.7 L627.9,231.8 L631.9,233.3 L640.4,233.3 L648.1,236.3 L656.2,232.8 L662.2,234.3 L661.8,241.8 L660.2,247.6 L657.8,253.9 L655.0,259.6 L648.1,265.7 L657.8,268.1 L662.2,279.5 L670.3,293.0 L674.8,303.9 L682.4,316.8 L689.3,329.5 L691.7,341.2 L698.6,340.7 L710.7,335.8 L726.9,329.5 L739.0,321.1 L749.1,315.1 L758.4,299.6 L753.1,294.3 L744.3,283.1 L739.0,290.7 L726.9,293.0 L724.9,286.3 L719.6,283.1 L712.7,272.7 L709.9,265.7 L714.8,264.8 L722.0,270.4 L724.9,275.4 L737.0,281.8 L747.1,280.4 L757.2,286.7 L767.3,287.6 L785.5,287.2 L789.5,293.0 L793.5,295.2 L799.6,299.6 L810.1,305.2 L810.9,314.7 L813.7,327.4 L819.8,342.0 L825.1,354.3 L829.9,360.1 L832.7,356.4 L837.2,351.1 L840.8,337.8 L840.8,329.5 L849.3,323.2 L859.4,313.4 L868.3,303.9 L875.6,301.7 L882.4,299.6 L887.7,300.0 L889.7,307.4 L897.4,316.8 L898.2,327.4 L911.1,325.3 L914.7,339.9 L913.9,352.3 L914.7,359.7 L922.0,370.6 L926.1,381.6 L934.9,387.6 L938.2,386.8 L934.5,374.7 L929.7,367.8 L922.8,362.5 L920.8,355.2 L917.6,350.2 L920.8,342.0 L924.4,338.3 L930.9,343.2 L932.9,348.2 L940.2,358.0 L945.0,354.3 L949.1,350.2 L958.0,344.9 L958.4,337.8 L956.4,329.9 L949.1,323.2 L944.2,315.5 L947.9,308.2 L953.1,303.9 L959.2,303.9 L963.2,309.1 L965.2,303.9 L975.3,300.4 L987.5,297.4 L995.5,290.7 L1000.0,284.0 L1003.6,275.0 L1009.7,265.7 L1005.6,261.0 L1008.9,257.3 L1003.6,249.1 L998.4,241.8 L1003.6,235.8 L1011.7,231.8 L1005.6,227.7 L997.2,229.7 L993.5,223.6 L992.3,221.5 L999.6,216.8 L1005.6,212.0 L1009.7,213.6 L1006.4,218.9 L1010.9,220.0 L1019.0,217.3 L1022.6,228.2 L1027.9,241.8 L1031.9,243.7 L1039.2,240.3 L1040.0,234.3 L1035.9,224.1 L1031.9,217.3 L1040.8,211.5 L1044.8,203.9 L1054.1,201.2 L1064.2,195.1 L1074.3,180.2 L1084.4,168.2 L1086.4,142.8 L1084.4,136.1 L1072.3,132.7 L1064.2,127.1 L1072.3,114.9 L1094.5,93.6 L1114.7,93.6 L1132.9,96.0 L1143.0,93.6 L1151.1,75.6 L1163.2,75.6 L1175.3,67.0 L1179.4,88.0 L1171.3,103.7 L1175.3,117.1 L1163.2,138.1 L1149.1,152.6 L1147.0,107.5 L1155.1,88.0 L1203.6,88.0 L1244.0,44.2 L1244.0,-33.7 L1082.4,-33.7 L1001.6,-47.1 L941.0,-109.9 L880.4,-76.5 L840.0,-47.1 L799.6,-47.1 L791.5,8.3 L759.2,2.7 L739.0,8.3 L718.8,13.7 L698.6,10.5 L694.6,26.3 L684.5,31.4 L676.4,48.0 L665.5,51.7 L658.2,49.8 L656.2,39.3 L650.1,27.4 L662.2,26.3 L674.4,33.4 L682.4,29.4 L682.4,18.0 L670.3,8.3 L650.1,-1.9 L638.0,-6.5Z"/><path d="M493.8,158.9 L504.7,155.1 L522.1,151.9 L523.7,141.5 L518.0,136.7 L515.6,129.2 L510.3,121.4 L508.3,106.0 L503.5,99.1 L496.6,99.1 L491.8,107.5 L494.2,116.4 L497.0,125.7 L504.7,126.4 L503.5,134.7 L498.2,137.4 L499.8,144.1 L495.8,147.4 L503.9,150.0Z"/><path d="M492.6,144.8 L492.2,134.0 L494.2,128.5 L487.3,123.6 L482.5,129.2 L476.4,132.7 L477.2,142.8 L475.2,147.4 L483.3,148.7Z"/><path d="M566.9,226.7 L579.8,225.1 L577.8,233.3 L567.3,228.7Z"/><path d="M550.7,221.5 L556.4,221.0 L556.4,211.0 L549.9,211.5Z"/><path d="M551.5,208.8 L555.2,208.8 L554.8,200.1 L551.5,203.4Z"/><path d="M611.7,238.8 L623.1,240.3 L621.8,241.8 L612.5,240.8Z"/><path d="M647.3,242.8 L656.6,238.8 L653.4,242.3Z"/><path d="M1040.4,250.1 L1046.0,247.2 L1049.3,253.9 L1046.0,260.1 L1042.8,259.6 L1041.2,252.5Z"/><path d="M1052.1,250.6 L1060.2,245.7 L1060.2,250.1 L1054.1,252.5Z"/><path d="M1045.6,245.2 L1052.1,239.8 L1065.4,238.8 L1069.5,230.3 L1076.3,229.7 L1082.4,218.9 L1082.4,212.0 L1088.1,209.4 L1090.1,218.9 L1086.0,229.2 L1085.6,238.3 L1081.6,242.3 L1077.6,243.7 L1070.3,243.7 L1066.2,249.1 L1062.2,244.2 L1054.1,245.2Z"/><path d="M1082.4,208.3 L1083.2,199.0 L1088.9,186.6 L1094.5,192.8 L1104.6,198.4 L1095.7,205.6 L1086.4,206.7Z"/><path d="M1090.5,183.1 L1096.5,180.2 L1092.5,165.1 L1094.5,146.1 L1094.5,132.7 L1091.3,130.6 L1089.7,146.1 L1090.5,171.2Z"/><path d="M1002.0,297.4 L1005.6,287.2 L1009.7,288.5 L1004.8,301.7Z"/><path d="M955.5,313.8 L963.2,310.0 L965.2,312.1 L959.2,318.1Z"/><path d="M839.2,360.5 L840.8,353.1 L847.7,362.5 L844.0,368.6 L839.6,366.6Z"/><path d="M1001.6,327.4 L1003.6,316.8 L1010.5,316.8 L1009.7,325.3 L1017.8,339.9 L1007.7,336.6 L1004.0,334.5Z"/><path d="M1009.7,364.5 L1025.8,354.3 L1027.9,364.5 L1021.8,369.4 L1015.7,361.3Z"/><path d="M1009.7,344.9 L1017.8,342.0 L1023.8,348.2 L1017.8,353.1 L1011.7,354.3Z"/><path d="M901.8,370.6 L910.7,371.9 L922.8,384.8 L937.0,396.9 L945.0,405.0 L945.0,416.4 L939.0,416.4 L928.9,409.1 L920.8,396.9 L914.7,386.0Z"/><path d="M941.8,420.4 L947.1,417.2 L954.3,418.0 L965.2,419.2 L971.7,420.8 L979.4,424.5 L979.0,428.2 L965.2,426.1 L953.1,424.5 L945.0,422.5Z"/><path d="M957.2,386.8 L960.0,384.8 L965.2,386.8 L973.3,380.0 L983.0,372.7 L988.7,364.5 L992.7,368.6 L998.4,371.5 L993.5,375.5 L992.7,388.9 L997.6,389.3 L987.5,399.0 L985.4,408.7 L979.4,409.1 L968.1,406.2 L961.2,403.0 L961.2,396.9 L957.2,392.9Z"/><path d="M999.6,415.2 L1003.2,415.6 L1003.6,405.0 L1005.6,403.8 L1009.7,412.3 L1014.9,411.1 L1007.7,400.2 L1014.9,396.9 L1005.6,396.5 L1003.2,390.9 L1019.8,390.9 L1021.8,386.8 L1011.7,388.9 L1001.6,389.7 L1000.0,396.9 L997.6,407.1Z"/><path d="M1046.0,398.6 L1058.2,396.9 L1072.3,399.0 L1086.4,403.4 L1105.8,411.1 L1112.7,418.0 L1114.7,427.4 L1124.8,435.6 L1110.7,433.9 L1104.6,425.3 L1096.5,429.4 L1086.4,430.2 L1078.4,425.7 L1073.5,415.2 L1060.2,409.1 L1054.1,409.1 L1050.1,404.6 L1054.1,401.8Z"/><path d="M981.4,426.1 L997.6,426.6 L1013.7,426.1 L1013.7,428.6 L997.6,429.0 L981.4,429.0Z"/><path d="M1015.7,434.7 L1029.9,427.0 L1021.8,432.7Z"/><path d="M975.3,484.1 L977.4,501.8 L981.4,520.1 L981.4,536.7 L991.5,544.0 L1005.6,538.2 L1017.8,533.3 L1025.8,530.9 L1038.0,527.6 L1050.1,529.0 L1060.2,534.3 L1066.2,543.5 L1072.3,535.2 L1074.3,541.6 L1073.5,548.0 L1080.4,548.5 L1084.4,559.1 L1096.5,563.2 L1106.6,564.3 L1112.7,559.1 L1122.8,556.6 L1128.1,538.2 L1134.9,524.8 L1136.9,510.8 L1134.9,497.3 L1124.8,486.2 L1118.8,477.6 L1107.9,471.1 L1103.8,454.2 L1096.5,450.0 L1092.5,436.8 L1088.9,445.5 L1088.5,458.4 L1082.4,465.6 L1073.1,459.7 L1064.2,453.4 L1069.5,442.6 L1067.0,441.3 L1054.1,438.9 L1046.0,442.6 L1042.0,445.9 L1039.6,453.8 L1030.7,449.6 L1024.6,451.3 L1015.7,461.8 L1010.5,466.9 L1005.6,473.3 L995.5,476.7 L988.3,478.4 L979.4,483.2Z"/><path d="M1101.4,573.2 L1115.9,574.3 L1114.7,585.7 L1108.7,589.0 L1103.4,581.9Z"/><path d="M447.7,306.1 L450.1,312.5 L450.9,327.4 L446.5,332.8 L449.3,342.0 L455.4,348.2 L462.3,354.3 L468.3,362.5 L478.4,371.5 L486.5,375.1 L500.6,371.9 L508.7,373.9 L520.8,369.0 L528.1,367.0 L535.0,367.8 L541.0,375.5 L551.1,374.3 L556.0,378.7 L556.4,388.9 L554.0,396.9 L563.3,411.1 L566.5,418.4 L570.9,431.5 L571.7,441.7 L565.3,457.1 L564.5,466.9 L575.4,486.2 L578.2,508.5 L586.3,522.4 L590.7,538.2 L597.2,543.0 L607.7,539.1 L620.2,539.1 L629.9,531.9 L642.0,516.8 L648.1,508.5 L649.3,499.5 L660.2,492.8 L659.8,484.1 L657.0,474.5 L664.3,470.3 L676.4,460.5 L681.2,451.3 L680.4,435.6 L675.6,427.4 L675.2,419.2 L679.2,405.0 L684.5,400.2 L692.5,390.1 L702.6,382.8 L710.7,373.5 L718.0,359.2 L723.6,344.9 L712.7,347.4 L698.6,350.2 L691.7,346.1 L688.5,339.9 L678.4,328.2 L674.4,321.1 L667.9,312.5 L666.3,306.1 L660.2,293.0 L653.4,277.3 L648.1,266.2 L647.3,260.1 L636.0,261.0 L625.9,259.6 L617.8,258.2 L609.7,253.9 L597.6,261.0 L593.6,264.3 L585.5,261.0 L579.4,256.3 L569.3,252.5 L561.2,250.1 L558.4,244.2 L561.2,237.8 L557.2,230.8 L551.1,232.3 L537.0,232.8 L526.9,233.8 L510.7,240.8 L493.0,237.8 L490.5,245.2 L478.4,253.9 L477.2,266.7 L466.3,275.4 L458.2,284.0 L448.1,299.6Z"/><path d="M716.0,441.7 L720.4,456.3 L716.8,464.7 L707.5,496.4 L699.4,499.5 L693.3,488.4 L695.4,475.4 L694.6,463.9 L703.4,457.1 L710.7,448.0Z"/></g><g fill="#fefefe"><path d="M107.1,-33.7 L121.3,-33.7 L118.1,19.1 L107.1,19.1Z"/><path d="M127.3,-33.7 L138.3,-33.7 L136.6,12.6 L130.6,23.2 L127.3,12.6Z"/><path d="M158.0,-33.7 L172.2,-33.7 L169.0,15.9 L164.5,23.2 L159.7,16.9Z"/><path d="M805.7,-8.8 L809.7,28.4 L817.8,22.2 L821.8,-8.8Z"/><path d="M145.1,179.0 L161.3,168.2 L174.2,177.2 L175.4,180.2 L165.3,180.2 L151.2,179.6Z"/><path d="M162.1,205.6 L165.3,184.3 L173.4,183.1 L168.1,194.5 L167.3,204.5Z"/><path d="M183.5,200.1 L175.4,184.3 L188.3,183.7 L193.6,191.7Z"/><path d="M179.9,207.2 L197.6,200.6 L198.0,202.8 L183.5,208.8Z"/><path d="M194.4,198.4 L209.0,194.0 L208.5,197.9Z"/><path d="M124.9,157.0 L116.8,138.1 L120.9,135.4 L126.9,149.3Z"/><path d="M44.1,79.8 L60.3,67.0 L72.4,64.4 L64.3,75.6 L52.2,80.7Z"/><path d="M11.8,44.2 L28.0,26.3 L40.1,29.4 L36.0,44.2 L19.9,46.1Z"/><path d="M937.0,148.0 L947.1,139.4 L957.2,122.2 L960.4,124.3 L953.1,140.8 L943.0,149.3Z"/><path d="M645.3,394.1 L654.2,392.1 L655.0,399.0 L650.1,403.4 L644.9,399.4Z"/><path d="M629.9,208.3 L631.9,197.3 L636.8,187.7 L642.0,179.6 L652.1,183.1 L648.1,186.6 L652.1,191.7 L660.2,188.9 L664.7,186.6 L671.1,176.6 L675.6,176.6 L668.3,183.1 L672.3,192.8 L678.4,197.9 L684.5,207.7 L678.4,211.0 L664.3,209.4 L658.2,205.6 L650.1,206.1 L642.0,209.9 L634.0,209.9Z"/><path d="M706.7,191.7 L716.8,179.6 L726.9,177.8 L731.7,187.1 L724.9,191.7 L729.7,202.8 L735.0,208.3 L730.9,218.9 L734.6,230.3 L722.8,233.3 L714.8,225.1 L716.8,214.7 L708.7,202.8Z"/></g><g fill="none" stroke="#b4b4b4" stroke-width="0.75"><path d="M19.9,165.1 L132.2,165.1 L132.2,162.7 L155.2,171.2 L175.4,180.2 L183.9,187.1 L183.5,205.6 L197.6,200.1 L207.7,193.4 L213.8,188.9 L227.9,188.9 L234.0,179.0 L238.0,174.8 L242.1,175.4 L242.9,184.8 L246.1,188.9"/><path d="M-52.8,88.0 L-52.8,-4.2"/><path d="M43.7,253.9 L53.4,253.0 L68.4,259.6 L79.7,259.6 L86.5,257.3 L94.6,267.6 L100.7,270.4 L106.7,266.7 L114.8,277.3 L124.1,284.5"/><path d="M144.3,333.7 L145.1,319.8 L149.2,319.8 L156.4,319.8 L160.1,316.8"/><path d="M156.4,327.8 L156.4,334.1 L161.3,336.2 L164.1,339.9"/><path d="M180.7,331.6 L169.4,336.2 L165.3,339.9"/><path d="M178.7,348.6 L170.6,347.8"/><path d="M183.1,353.9 L181.5,359.2"/><path d="M204.1,357.6 L204.9,360.9"/><path d="M225.9,344.9 L223.9,354.3 L225.9,364.5 L234.0,364.5 L244.1,368.6 L242.9,374.7 L244.1,384.8 L246.5,388.1"/><path d="M274.4,358.4 L270.4,370.6 L274.4,371.9"/><path d="M246.5,388.1 L258.2,376.7 L274.4,371.9 L288.5,384.8 L298.6,384.0 L308.3,375.9"/><path d="M286.5,368.6 L286.5,384.8"/><path d="M298.6,369.8 L298.6,384.0"/><path d="M197.6,387.6 L205.7,391.3 L212.6,393.7"/><path d="M212.6,393.7 L221.9,402.2 L234.0,409.9"/><path d="M234.0,409.9 L236.0,388.9 L246.5,388.1"/><path d="M192.4,406.6 L197.6,413.1 L208.5,403.0 L212.6,393.7"/><path d="M234.0,409.9 L221.9,422.5 L223.9,431.5 L232.0,437.6 L238.0,437.6"/><path d="M238.0,437.6 L236.0,452.1 L238.0,458.4 L236.0,464.7"/><path d="M232.4,468.1 L236.0,464.7"/><path d="M238.0,437.6 L253.0,433.5 L256.2,443.8 L270.4,448.0 L273.6,454.2 L281.7,459.7 L282.5,474.5"/><path d="M236.0,464.7 L240.1,473.3 L242.1,484.1 L246.1,488.4"/><path d="M282.5,474.5 L264.3,484.1"/><path d="M246.1,488.4 L254.2,484.1 L264.3,484.1"/><path d="M246.1,488.4 L240.1,497.3 L236.0,510.8 L234.0,534.3 L232.0,549.0 L227.9,569.5 L227.9,591.3 L225.9,608.6 L221.9,626.9 L240.1,642.4"/><path d="M282.5,474.5 L292.6,485.4 L297.4,495.1"/><path d="M264.3,484.1 L280.5,495.1 L282.5,507.6 L292.6,507.6 L297.4,499.5"/><path d="M297.4,499.5 L300.3,504.0 L286.5,520.1"/><path d="M284.1,521.0 L302.7,531.9 L300.7,537.7"/><path d="M284.1,521.0 L280.9,536.7"/><path d="M509.5,197.9 L529.7,203.4"/><path d="M481.2,206.1 L490.5,206.1 L488.5,218.9 L486.9,230.8"/><path d="M526.9,152.6 L533.8,158.9 L540.2,162.1 L549.9,165.1 L547.5,173.7 L544.3,180.8 L545.1,183.7 L543.5,188.3 L547.1,195.6"/><path d="M530.5,150.0 L537.0,149.3 L541.0,153.9"/><path d="M541.0,153.9 L543.9,146.1 L545.9,137.4"/><path d="M551.9,126.4 L557.2,127.1"/><path d="M574.2,133.3 L575.8,146.1 L577.4,152.6"/><path d="M565.7,157.0 L574.6,152.6 L577.4,152.6"/><path d="M569.3,174.3 L565.3,173.7 L555.2,174.3"/><path d="M547.5,173.7 L555.2,173.7"/><path d="M545.1,183.7 L553.2,183.1 L559.2,180.2"/><path d="M555.2,174.3 L559.2,178.4"/><path d="M559.2,178.4 L566.9,177.2 L572.1,180.2"/><path d="M565.7,157.0 L568.9,166.4 L577.4,165.1 L585.5,167.6"/><path d="M585.5,167.6 L583.5,174.3 L581.4,179.0"/><path d="M572.1,180.2 L581.4,179.0 L579.4,186.0 L571.7,186.0"/><path d="M577.4,152.6 L583.5,157.0 L592.8,162.1"/><path d="M592.8,162.1 L607.7,164.5"/><path d="M585.5,167.6 L592.8,162.1"/><path d="M585.5,171.2 L593.6,171.2 L607.7,169.4"/><path d="M581.4,179.0 L591.5,184.3 L597.6,181.9 L605.7,174.3"/><path d="M607.7,164.5 L611.7,155.8 L613.8,148.7 L611.7,136.1 L608.9,130.6 L595.6,129.9"/><path d="M607.7,169.4 L623.9,169.4 L631.9,170.0 L638.0,180.2"/><path d="M613.8,148.7 L625.9,148.7 L640.0,150.6 L646.1,146.1 L654.2,144.1"/><path d="M654.2,144.1 L660.2,155.8 L670.3,158.9 L678.4,162.1 L677.6,172.5 L671.1,176.6"/><path d="M605.7,174.3 L609.7,171.2 L623.9,169.4 L630.7,180.2 L630.7,186.0 L636.8,187.7"/><path d="M607.7,191.7 L617.8,196.2 L625.9,194.0 L632.3,196.2"/><path d="M607.7,203.9 L615.8,208.3 L623.1,207.2 L629.9,205.6"/><path d="M623.1,207.2 L623.1,211.5"/><path d="M593.6,188.9 L595.6,200.1 L599.6,203.9 L607.3,203.9 L607.7,191.7"/><path d="M580.2,187.7 L587.9,188.3 L594.8,189.4 L591.5,202.8"/><path d="M595.6,206.7 L599.6,203.9 L601.6,211.0 L599.6,216.3"/><path d="M597.6,217.9 L601.6,212.0 L609.7,209.4 L615.8,208.3"/><path d="M629.9,92.0 L627.9,107.5 L630.7,117.1 L641.2,122.2 L645.3,145.4"/><path d="M601.6,118.6 L623.9,120.7 L630.7,117.1"/><path d="M605.7,106.0 L617.8,106.0 L627.9,107.5"/><path d="M611.7,133.3 L619.8,131.3 L623.9,120.7"/><path d="M629.1,84.0 L636.0,75.6 L644.1,63.5 L636.4,48.9 L638.0,34.4 L634.0,2.7 L631.9,-14.8"/><path d="M613.8,36.4 L612.5,19.1 L601.6,2.7 L597.6,1.6"/><path d="M567.3,96.0 L565.3,79.8 L567.3,55.4 L575.4,39.3 L583.5,15.9 L591.5,8.3 L597.6,1.6"/><path d="M597.6,1.6 L603.7,0.4 L617.8,4.9 L623.9,-7.7 L631.9,-3.0"/><path d="M684.5,208.3 L692.5,210.4 L697.8,217.9 L695.8,230.8 L688.1,231.3 L678.4,232.8 L666.3,233.8 L662.2,235.8"/><path d="M678.4,197.9 L686.5,199.0 L694.6,201.8 L704.7,206.7 L712.7,206.7"/><path d="M692.5,210.4 L698.6,209.9 L704.7,206.7"/><path d="M697.8,217.9 L704.7,222.0 L710.7,224.1 L714.4,224.6"/><path d="M695.8,230.8 L700.6,239.3 L702.6,251.5 L709.5,258.7 L710.7,265.7"/><path d="M688.1,231.3 L682.4,244.2 L674.4,254.9 L666.3,258.7 L658.2,268.1"/><path d="M682.4,244.2 L696.6,256.3 L706.7,269.9 L710.7,272.2"/><path d="M689.3,325.3 L704.7,321.9 L726.9,314.7 L741.0,298.7 L744.3,289.0"/><path d="M726.9,314.7 L730.9,324.9"/><path d="M722.8,290.3 L728.9,298.2 L741.0,298.7"/><path d="M734.6,230.3 L747.1,226.7 L761.2,233.8 L764.0,238.8 L763.2,258.7 L769.3,268.5 L771.3,281.3 L765.7,287.6"/><path d="M762.8,266.2 L785.5,266.2 L795.6,257.3 L801.6,247.6 L805.7,236.8 L817.8,231.3"/><path d="M761.2,233.8 L777.4,230.8 L790.7,230.8 L805.7,232.3 L817.8,231.3"/><path d="M708.7,185.4 L714.8,171.2 L724.9,149.3 L739.0,153.9 L765.3,152.6 L763.2,136.1 L779.4,128.5 L799.6,124.3 L813.7,132.7 L827.1,130.6 L840.0,151.3 L856.2,153.9 L869.5,163.9"/><path d="M728.9,207.2 L743.0,209.4 L751.1,202.3 L763.2,192.3 L767.3,197.3 L783.4,200.1 L783.4,205.6 L791.5,212.6 L803.6,204.5 L813.7,202.8 L839.6,201.2 L842.0,188.9 L850.1,187.7 L852.1,176.0 L862.2,177.2 L869.5,163.9"/><path d="M743.0,209.4 L753.1,202.8 L766.5,209.4 L777.4,226.7"/><path d="M791.5,212.6 L803.6,213.6 L813.7,218.9 L817.8,231.3"/><path d="M817.8,231.3 L819.8,224.1 L813.7,218.9"/><path d="M819.8,213.6 L839.6,201.2"/><path d="M869.5,163.9 L874.3,162.1 L886.5,156.4 L896.6,155.8 L910.7,149.3 L913.9,157.0 L928.9,155.8 L945.0,157.0 L955.1,163.3 L965.2,162.7 L986.7,158.9 L991.5,160.2 L1001.6,142.8 L1007.7,138.1 L1021.8,138.1 L1031.9,157.7 L1044.0,165.8 L1054.1,170.6 L1062.2,168.8 L1056.1,184.3 L1046.0,189.4 L1047.3,200.1 L1044.0,202.8"/><path d="M869.5,163.9 L882.4,174.3 L884.4,183.1 L892.5,188.9 L906.7,201.2 L924.8,202.3 L941.0,207.7 L953.1,203.4 L967.3,196.8 L969.3,188.3 L977.4,189.4 L988.3,180.8 L999.6,177.2 L993.5,172.5 L986.7,158.9"/><path d="M1019.0,217.3 L1027.9,208.3 L1033.9,205.6 L1042.0,203.9 L1044.0,202.8"/><path d="M1026.6,227.7 L1031.1,225.1 L1035.5,223.6"/><path d="M817.8,231.3 L831.1,239.3 L838.0,253.4 L836.0,260.1 L844.0,264.8 L858.2,271.8 L872.3,275.4 L876.4,278.2 L888.5,275.9 L902.6,269.5 L909.9,274.1 L914.7,281.8 L912.7,293.0 L918.8,300.9 L926.9,304.8 L929.7,300.0 L934.9,298.7 L943.0,296.1 L947.9,298.7 L953.1,303.9"/><path d="M817.8,231.3 L814.5,244.2 L817.8,252.5 L819.8,254.4 L817.8,261.5 L813.3,266.2 L803.6,275.4 L799.6,281.8 L803.6,291.6 L793.5,295.2"/><path d="M840.4,271.3 L856.2,277.7 L872.3,281.8"/><path d="M872.7,299.6 L876.4,284.0 L888.5,288.5 L890.5,299.6"/><path d="M889.7,307.4 L890.9,301.7 L893.7,290.7 L898.6,286.3 L901.4,281.3 L909.9,274.1"/><path d="M914.7,352.3 L917.6,344.1 L914.7,327.4 L910.7,323.2 L920.8,309.1 L926.9,304.8"/><path d="M920.8,309.1 L924.8,321.1 L937.0,319.8 L943.0,331.6 L937.0,334.5 L930.9,343.2"/><path d="M926.9,304.8 L937.0,310.4 L947.1,323.2 L951.1,333.7 L945.0,335.8"/><path d="M945.0,335.8 L945.0,346.1 L939.0,350.2"/><path d="M921.2,366.6 L928.9,368.2"/><path d="M960.0,384.8 L969.3,387.2 L979.4,386.8 L983.4,378.7 L991.5,375.9"/><path d="M1086.4,403.4 L1086.4,430.2"/><path d="M509.5,241.8 L509.9,253.9 L496.6,265.7 L481.7,271.8 L481.7,278.2"/><path d="M463.5,276.3 L481.7,276.3 L481.7,284.0 L468.3,284.0 L468.3,295.2 L464.3,304.8 L448.1,304.8"/><path d="M481.7,278.2 L497.4,289.0 L492.6,304.8 L494.6,325.3 L470.3,329.5 L468.3,333.7 L449.3,325.3"/><path d="M497.4,289.0 L521.6,306.1 L533.8,313.8"/><path d="M533.8,313.8 L540.2,313.0 L565.3,295.2 L557.2,288.5 L555.2,265.7 L551.1,256.3 L547.1,250.6 L550.3,241.8 L551.1,232.3"/><path d="M563.3,251.0 L557.2,263.4 L555.2,265.7"/><path d="M617.8,258.2 L617.8,301.7 L613.8,310.4"/><path d="M565.3,295.2 L577.4,297.4 L613.8,312.5 L617.8,310.4"/><path d="M617.8,301.7 L666.3,301.7"/><path d="M613.8,310.4 L607.7,335.8 L605.7,342.0 L605.7,348.6"/><path d="M533.8,313.8 L530.9,329.5 L518.8,332.0 L520.8,339.9 L530.9,345.7 L533.0,337.8 L545.1,339.9 L571.3,337.0 L575.4,339.9"/><path d="M449.3,342.4 L461.5,342.0 L470.7,342.4 L482.5,346.9 L483.7,352.3 L475.2,358.4 L470.3,364.5"/><path d="M486.5,375.1 L482.5,362.1 L483.7,352.3"/><path d="M470.7,342.4 L494.6,350.2 L505.5,354.3"/><path d="M503.9,372.7 L505.9,354.3 L514.4,348.2 L517.6,347.8 L521.6,368.2"/><path d="M523.3,367.8 L520.4,348.2"/><path d="M527.7,367.0 L531.3,345.3"/><path d="M494.6,350.2 L494.6,342.0 L506.7,331.6 L518.8,332.0"/><path d="M551.1,374.3 L555.2,366.6 L564.5,364.5 L571.3,350.2 L575.4,339.9"/><path d="M575.4,339.9 L579.4,352.3 L573.4,356.4 L581.4,361.3 L591.5,358.4 L605.7,348.6"/><path d="M581.4,378.7 L591.5,374.7 L607.7,375.9 L617.8,372.7 L627.9,372.7"/><path d="M605.7,348.6 L611.7,358.4 L627.9,372.7"/><path d="M556.4,384.0 L562.5,384.0 L569.3,383.6 L581.4,384.8 L581.4,378.7"/><path d="M562.5,384.0 L569.3,388.9 L574.6,401.0 L565.3,407.1"/><path d="M581.4,384.8 L587.5,396.9 L581.4,409.1 L569.3,413.1"/><path d="M566.5,417.2 L583.5,423.3 L589.5,425.3 L603.7,422.5 L604.9,437.6 L613.8,437.6 L613.8,445.9 L605.7,445.9 L605.7,460.5"/><path d="M613.8,437.6 L619.8,438.9 L631.9,429.4 L640.0,426.1"/><path d="M627.9,372.7 L641.2,378.7 L636.4,396.9 L634.0,411.1 L636.0,419.2 L640.0,426.1"/><path d="M607.7,352.3 L613.8,357.6 L625.9,354.3 L638.0,352.3 L650.1,350.2 L654.2,354.3"/><path d="M654.2,354.3 L652.1,360.5 L658.2,372.7 L654.2,375.9 L652.1,377.5 L641.2,378.7"/><path d="M654.2,354.3 L662.2,340.7 L664.3,334.5 L672.3,333.7 L683.2,333.7 L688.5,342.0"/><path d="M689.7,346.1 L694.6,356.4 L710.3,360.5 L698.6,372.7 L686.5,376.7 L674.4,378.7 L658.2,372.7"/><path d="M682.4,399.8 L682.4,381.6 L686.5,376.7"/><path d="M675.2,411.9 L654.2,396.9 L638.0,396.9"/><path d="M654.2,375.9 L658.2,386.8 L654.2,396.9"/><path d="M680.4,435.6 L668.3,440.1 L658.2,439.7"/><path d="M640.0,426.1 L649.7,431.1 L652.1,441.7 L658.2,439.7"/><path d="M638.0,456.7 L650.1,460.5 L649.3,471.1 L646.1,485.4 L643.3,485.8"/><path d="M619.0,466.0 L629.9,460.5 L638.0,456.7"/><path d="M564.5,463.9 L571.3,462.6 L589.5,464.7 L601.6,466.9 L611.7,464.7 L619.0,466.0"/><path d="M601.6,466.9 L597.6,484.1 L597.6,496.4 L597.6,512.7 L587.1,514.0 L583.5,513.6"/><path d="M597.6,496.4 L609.7,498.6 L619.8,500.4 L625.9,492.8 L635.6,484.9 L643.3,485.8"/><path d="M619.0,466.0 L621.8,469.0 L627.9,477.6 L635.6,484.9"/><path d="M643.3,485.8 L646.1,497.3 L649.7,505.8"/></g></svg>
<div class="r" style="left:633.5px;top:364.5px;width:1143.0px;height:570.0px;box-shadow:inset 0 0 0 1px #e2e2e2;"></div>
<div class="t" style="left:640.5px;top:449.5px;width:120px;text-align:center;font-size:11px;line-height:13px;color:#7d7d7d;letter-spacing:-0.1px;text-shadow:0 0 1.5px #fff,0 0 1.5px #fff,0 0 1px #fff">Canada</div>
<div class="t" style="left:691px;top:565.0px;width:120px;text-align:center;font-size:11px;line-height:13px;color:#7d7d7d;letter-spacing:-0.1px;text-shadow:0 0 1.5px #fff,0 0 1.5px #fff,0 0 1px #fff">United</div>
<div class="t" style="left:691px;top:578.0px;width:120px;text-align:center;font-size:11px;line-height:13px;color:#7d7d7d;letter-spacing:-0.1px;text-shadow:0 0 1.5px #fff,0 0 1.5px #fff,0 0 1px #fff">States</div>
<div class="t" style="left:679px;top:652.5px;width:120px;text-align:center;font-size:11px;line-height:13px;color:#7d7d7d;letter-spacing:-0.1px;text-shadow:0 0 1.5px #fff,0 0 1.5px #fff,0 0 1px #fff">Mexico</div>
<div class="t" style="left:793px;top:733.5px;width:120px;text-align:center;font-size:11px;line-height:13px;color:#7d7d7d;letter-spacing:-0.1px;text-shadow:0 0 1.5px #fff,0 0 1.5px #fff,0 0 1px #fff">Colombia</div>
<div class="t" style="left:794px;top:799.5px;width:120px;text-align:center;font-size:11px;line-height:13px;color:#7d7d7d;letter-spacing:-0.1px;text-shadow:0 0 1.5px #fff,0 0 1.5px #fff,0 0 1px #fff">Peru</div>
<div class="t" style="left:891.7px;top:795.5px;width:120px;text-align:center;font-size:11px;line-height:13px;color:#7d7d7d;letter-spacing:-0.1px;text-shadow:0 0 1.5px #fff,0 0 1.5px #fff,0 0 1px #fff">Brazil</div>
<div class="t" style="left:830px;top:889.5px;width:120px;text-align:center;font-size:11px;line-height:13px;color:#7d7d7d;letter-spacing:-0.1px;text-shadow:0 0 1.5px #fff,0 0 1.5px #fff,0 0 1px #fff">Argentina</div>
<div class="t" style="left:1099px;top:534.5px;width:120px;text-align:center;font-size:11px;line-height:13px;color:#7d7d7d;letter-spacing:-0.1px;text-shadow:0 0 1.5px #fff,0 0 1.5px #fff,0 0 1px #fff">France</div>
<div class="t" style="left:1076.4px;top:569.0px;width:120px;text-align:center;font-size:11px;line-height:13px;color:#7d7d7d;letter-spacing:-0.1px;text-shadow:0 0 1.5px #fff,0 0 1.5px #fff,0 0 1px #fff">Spain</div>
<div class="t" style="left:1228px;top:575.5px;width:120px;text-align:center;font-size:11px;line-height:13px;color:#7d7d7d;letter-spacing:-0.1px;text-shadow:0 0 1.5px #fff,0 0 1.5px #fff,0 0 1px #fff">Turkey</div>
<div class="t" style="left:1510.5px;top:402.5px;width:120px;text-align:center;font-size:11px;line-height:13px;color:#7d7d7d;letter-spacing:-0.1px;text-shadow:0 0 1.5px #fff,0 0 1.5px #fff,0 0 1px #fff">Russia</div>
<div class="t" style="left:1647px;top:592.5px;width:120px;text-align:center;font-size:11px;line-height:13px;color:#7d7d7d;letter-spacing:-0.1px;text-shadow:0 0 1.5px #fff,0 0 1.5px #fff,0 0 1px #fff">Japan</div>
<div class="t" style="left:1550.7px;top:751.5px;width:120px;text-align:center;font-size:11px;line-height:13px;color:#7d7d7d;letter-spacing:-0.1px;text-shadow:0 0 1.5px #fff,0 0 1.5px #fff,0 0 1px #fff">Indonesia</div>
<div class="t" style="left:1630px;top:850.5px;width:120px;text-align:center;font-size:11px;line-height:13px;color:#7d7d7d;letter-spacing:-0.1px;text-shadow:0 0 1.5px #fff,0 0 1.5px #fff,0 0 1px #fff">Australia</div>
<div class="t" style="left:1184px;top:876.0px;width:120px;text-align:center;font-size:11px;line-height:13px;color:#7d7d7d;letter-spacing:-0.1px;text-shadow:0 0 1.5px #fff,0 0 1.5px #fff,0 0 1px #fff">South</div>
<div class="t" style="left:1184px;top:889.0px;width:120px;text-align:center;font-size:11px;line-height:13px;color:#7d7d7d;letter-spacing:-0.1px;text-shadow:0 0 1.5px #fff,0 0 1.5px #fff,0 0 1px #fff">Africa</div>
<div class="t" style="left:1102px;top:627.5px;width:120px;text-align:center;font-size:11px;line-height:13px;color:#7d7d7d;letter-spacing:-0.1px;text-shadow:0 0 1.5px #fff,0 0 1.5px #fff,0 0 1px #fff">Algeria</div>
<svg class="s" style="left:634px;top:365px;overflow:hidden" width="1141.5" height="569" viewBox="0 0 1141.5 569"><defs><radialGradient id="halo"><stop offset="0.6" stop-color="#fff" stop-opacity="0.95"/><stop offset="0.8" stop-color="#fff" stop-opacity="0.6"/><stop offset="1" stop-color="#fff" stop-opacity="0"/></radialGradient></defs><circle cx="66.1" cy="94.5" r="11.5" fill="url(#halo)"/><circle cx="66.1" cy="94.5" r="7.5" fill="#4e79a7"/><circle cx="117.0" cy="215.9" r="11.5" fill="url(#halo)"/><circle cx="117.0" cy="215.9" r="7.5" fill="#4e79a7"/><circle cx="105.0" cy="298.0" r="11.5" fill="url(#halo)"/><circle cx="105.0" cy="298.0" r="7.5" fill="#4e79a7"/><circle cx="245.8" cy="317.9" r="11.5" fill="url(#halo)"/><circle cx="245.8" cy="317.9" r="7.5" fill="#4e79a7"/><circle cx="219.0" cy="377.8" r="11.5" fill="url(#halo)"/><circle cx="219.0" cy="377.8" r="7.5" fill="#4e79a7"/><circle cx="199.5" cy="397.3" r="11.5" fill="url(#halo)"/><circle cx="199.5" cy="397.3" r="7.5" fill="#4e79a7"/><circle cx="220.6" cy="445.2" r="11.5" fill="url(#halo)"/><circle cx="220.6" cy="445.2" r="7.5" fill="#4e79a7"/><circle cx="237.0" cy="490.3" r="11.5" fill="url(#halo)"/><circle cx="237.0" cy="490.3" r="7.5" fill="#4e79a7"/><circle cx="256.2" cy="535.0" r="11.5" fill="url(#halo)"/><circle cx="256.2" cy="535.0" r="7.5" fill="#4e79a7"/><circle cx="592.3" cy="32.9" r="11.5" fill="url(#halo)"/><circle cx="592.3" cy="32.9" r="7.5" fill="#4e79a7"/><circle cx="622.8" cy="65.5" r="11.5" fill="url(#halo)"/><circle cx="622.8" cy="65.5" r="7.5" fill="#4e79a7"/><circle cx="553.5" cy="76.3" r="11.5" fill="url(#halo)"/><circle cx="553.5" cy="76.3" r="7.5" fill="#4e79a7"/><circle cx="553.5" cy="118.0" r="11.5" fill="url(#halo)"/><circle cx="553.5" cy="118.0" r="7.5" fill="#4e79a7"/><circle cx="486.3" cy="137.4" r="11.5" fill="url(#halo)"/><circle cx="486.3" cy="137.4" r="7.5" fill="#4e79a7"/><circle cx="511.5" cy="143.4" r="11.5" fill="url(#halo)"/><circle cx="511.5" cy="143.4" r="7.5" fill="#4e79a7"/><circle cx="537.1" cy="145.1" r="11.5" fill="url(#halo)"/><circle cx="537.1" cy="145.1" r="7.5" fill="#4e79a7"/><circle cx="556.3" cy="149.4" r="11.5" fill="url(#halo)"/><circle cx="556.3" cy="149.4" r="7.5" fill="#4e79a7"/><circle cx="595.4" cy="143.4" r="11.5" fill="url(#halo)"/><circle cx="595.4" cy="143.4" r="7.5" fill="#4e79a7"/><circle cx="526.4" cy="179.4" r="11.5" fill="url(#halo)"/><circle cx="526.4" cy="179.4" r="7.5" fill="#4e79a7"/><circle cx="549.1" cy="178.0" r="11.5" fill="url(#halo)"/><circle cx="549.1" cy="178.0" r="7.5" fill="#4e79a7"/><circle cx="576.2" cy="173.2" r="11.5" fill="url(#halo)"/><circle cx="576.2" cy="173.2" r="7.5" fill="#4e79a7"/><circle cx="561.1" cy="193.1" r="11.5" fill="url(#halo)"/><circle cx="561.1" cy="193.1" r="7.5" fill="#4e79a7"/><circle cx="654.2" cy="221.2" r="11.5" fill="url(#halo)"/><circle cx="654.2" cy="221.2" r="7.5" fill="#4e79a7"/><circle cx="937.6" cy="46.0" r="11.5" fill="url(#halo)"/><circle cx="937.6" cy="46.0" r="7.5" fill="#4e79a7"/><circle cx="917.9" cy="236.2" r="11.5" fill="url(#halo)"/><circle cx="917.9" cy="236.2" r="7.5" fill="#4e79a7"/><circle cx="1035.4" cy="235.0" r="11.5" fill="url(#halo)"/><circle cx="1035.4" cy="235.0" r="7.5" fill="#4e79a7"/><circle cx="1073.8" cy="236.2" r="11.5" fill="url(#halo)"/><circle cx="1073.8" cy="236.2" r="7.5" fill="#4e79a7"/><circle cx="610.2" cy="529.0" r="11.5" fill="url(#halo)"/><circle cx="610.2" cy="529.0" r="7.5" fill="#4e79a7"/><circle cx="1056.2" cy="496.5" r="11.5" fill="url(#halo)"/><circle cx="1056.2" cy="496.5" r="7.5" fill="#4e79a7"/><circle cx="502.5" cy="212.6" r="7.2" fill="#4e79a7" stroke="#111" stroke-width="1.5"/></svg>
<div class="r" style="left:649.5px;top:380.5px;width:41.0px;height:40.0px;background:rgba(242,242,242,0.9);box-shadow:inset 0 0 0 1.5px #bdbdbd;box-shadow:inset 0 0 0 1.5px #bdbdbd, 0 2px 2px rgba(0,0,0,0.12);"></div>
<svg class="s" style="left:660px;top:389px;" width="20" height="22" viewBox="0 0 20 22"><circle cx="11.5" cy="8.5" r="6.5" fill="none" stroke="#666" stroke-width="1.6"/><path d="M7,13.5 L2,18.5" stroke="#666" stroke-width="1.8"/></svg>
<div class="r" style="left:649.5px;top:441.5px;width:41.0px;height:153.0px;background:rgba(242,242,242,0.9);box-shadow:inset 0 0 0 1.5px #bdbdbd, 0 2px 2px rgba(0,0,0,0.12);"></div>
<svg class="s" style="left:662px;top:455px;" width="18" height="18" viewBox="0 0 18 18"><path d="M9,1 V17 M1,9 H17" stroke="#555" stroke-width="2.8"/></svg>
<svg class="s" style="left:662px;top:495px;" width="18" height="4" viewBox="0 0 18 4"><path d="M1,2 H17" stroke="#555" stroke-width="2.8"/></svg>
<svg class="s" style="left:660px;top:518px;" width="22" height="22" viewBox="0 0 22 22"><path d="M2,10 L11,1.5 L20,10 M4.5,8 V20.5 H17.5 V8 M9,20.5 V14 H13 V20.5" fill="none" stroke="#666" stroke-width="1.5" stroke-linejoin="round"/></svg>
<div class="r" style="left:655px;top:550.5px;width:30px;height:1.0px;background:#d8d8d8;"></div>
<svg class="s" style="left:665px;top:565px;" width="12" height="17" viewBox="0 0 12 17"><path d="M1,1 L11,8.5 L1,16Z" fill="#666"/></svg>
<div class="r" style="left:634px;top:904px;width:287px;height:29px;background:rgba(255,255,255,0.65);"></div>
<div class="t" style="left:640.0px;top:912.0px;font-size:17.5px;color:#777777;font-weight:400;font-style:normal;letter-spacing:0.05px;">© 2020 Mapbox&nbsp;&nbsp;© OpenStreetMap</div>
<div class="r" style="left:1158.5px;top:603px;width:411.5px;height:119px;background:#ffffff;box-shadow:inset 0 0 0 2px #cbcbcb, 1px 3px 2px rgba(0,0,0,0.16);"></div>
<div class="t" style="left:1177.0px;top:625.3px;font-size:19px;color:#8a8a8a;font-weight:400;font-style:normal;letter-spacing:0.82px;">Dest Country:</div>
<div class="t" style="left:1377.5px;top:625.3px;font-size:19px;color:#333333;font-weight:400;font-style:normal;letter-spacing:0.75px;">ES</div>
<div class="t" style="left:1177.0px;top:652.2px;font-size:19px;color:#8a8a8a;font-weight:400;font-style:normal;letter-spacing:0.6px;">Flight Delay Type:</div>
<div class="t" style="left:1377.5px;top:652.2px;font-size:19px;color:#333333;font-weight:400;font-style:normal;letter-spacing:0.9px;">Late Aircraft Delay</div>
<div class="t" style="left:1177.0px;top:679.0px;font-size:19px;color:#8a8a8a;font-weight:400;font-style:normal;letter-spacing:0.59px;">Avg. Avg Ticket Price:</div>
<div class="t" style="left:1377.5px;top:679.0px;font-size:19px;color:#333333;font-weight:400;font-style:normal;letter-spacing:0.75px;">122.9</div>
<svg class="s" style="left:1122px;top:576px;" width="26" height="32" viewBox="0 0 26 32"><path d="M8.7,18 V4 Q8.7,2 10.6,2 Q12.5,2 12.5,4 V10.5 Q14,9 15.5,10.5 V11.5 Q17,10 18.5,11.5 V12.5 Q20,11 21.5,12 Q22.5,12.5 22.5,14 V21 Q22.5,25 20,28 Q18,29.5 15,29.5 Q12,29.5 10,27 L3,20 Q1.5,18.5 3,17.5 Q4.5,16.8 6,18 Z" fill="#fff" stroke="#111" stroke-width="1.3" stroke-linejoin="round"/><path d="M15.5,11 V16 M18.5,12 V16" stroke="#111" stroke-width="1.1"/></svg>
<div class="r" style="left:43px;top:949.5px;width:1747px;height:2.0px;background:#cfcfcf;"></div>
<div class="r" style="left:43px;top:951.5px;width:1747px;height:43.5px;background:#e6e6e6;"></div>
<div class="r" style="left:231.5px;top:952px;width:85.5px;height:43px;background:#f7f7f7;"></div>
<div class="r" style="left:230.5px;top:951px;width:1.5px;height:44px;background:#d3d3d3;"></div>
<div class="r" style="left:317px;top:951px;width:1.5px;height:44px;background:#d3d3d3;"></div>
<div class="r" style="left:364px;top:951px;width:1.5px;height:44px;background:#d3d3d3;"></div>
<div class="r" style="left:412px;top:951px;width:1.5px;height:44px;background:#d3d3d3;"></div>
<div class="r" style="left:460px;top:951px;width:1.5px;height:44px;background:#d3d3d3;"></div>
<svg class="s" style="left:58px;top:963px;" width="16" height="20" viewBox="0 0 16 20"><ellipse cx="7.5" cy="3.5" rx="6.5" ry="2.8" fill="none" stroke="#b3b3b3" stroke-width="1.3"/><path d="M1,3.5 V16 Q7.5,20 14,16 V3.5" fill="none" stroke="#b3b3b3" stroke-width="1.3"/></svg>
<div class="t" style="left:80.0px;top:960.9px;font-size:19px;color:#9a9a9a;font-weight:400;font-style:normal;letter-spacing:0px;">Data Source</div>
<div class="t" style="left:243.5px;top:961.5px;font-size:18.3px;color:#333333;font-weight:400;font-style:normal;letter-spacing:0px;">Sheet 1</div>
<svg class="s" style="left:331px;top:961px;" width="25" height="24" viewBox="0 0 25 24"><path d="M13,17 H1.5 V1.5 H18 V10" fill="none" stroke="#666" stroke-width="1.5"/><path d="M6,14 V10 M9.5,14 V6 M13,14 V8" stroke="#666" stroke-width="1.6"/><path d="M18.5,11 V23 M12.5,17 H24.5" stroke="#666" stroke-width="2.4"/></svg>
<svg class="s" style="left:379px;top:961px;" width="25" height="24" viewBox="0 0 25 24"><path d="M13,17 H1.5 V1.5 H18 V10 M1.5,8.5 H18 M9.5,1.5 V17" fill="none" stroke="#666" stroke-width="1.5"/><path d="M18.5,11 V23 M12.5,17 H24.5" stroke="#666" stroke-width="2.4"/></svg>
<svg class="s" style="left:427px;top:961px;" width="25" height="24" viewBox="0 0 25 24"><path d="M1.6,1 L9.4,4.4 V17.5 L1.6,14 Z M9.4,4.4 L16.8,1 V8.7" fill="none" stroke="#666" stroke-width="1.5" stroke-linejoin="round"/><path d="M17.7,10.5 V22.5 M11.7,16.6 H23.7" stroke="#666" stroke-width="2.4"/></svg>
<div class="r" style="left:43px;top:995px;width:1747px;height:1.5px;background:#d0d0d0;"></div>
<div class="r" style="left:43px;top:996.5px;width:1747px;height:24.5px;background:#ececec;"></div>
<div class="t" style="left:58.0px;top:1001.9px;font-size:15px;color:#333333;font-weight:400;font-style:normal;letter-spacing:0px;">172 marks</div>
<div class="t" style="left:146.0px;top:1001.9px;font-size:15px;color:#333333;font-weight:400;font-style:normal;letter-spacing:0.1px;">1 row by 1 column</div>
<div class="t" style="left:288.0px;top:1001.9px;font-size:15px;color:#333333;font-weight:400;font-style:normal;letter-spacing:0.08px;">SUM of AVG(Avg Ticket Price): 111,678.5</div>
</body></html>
